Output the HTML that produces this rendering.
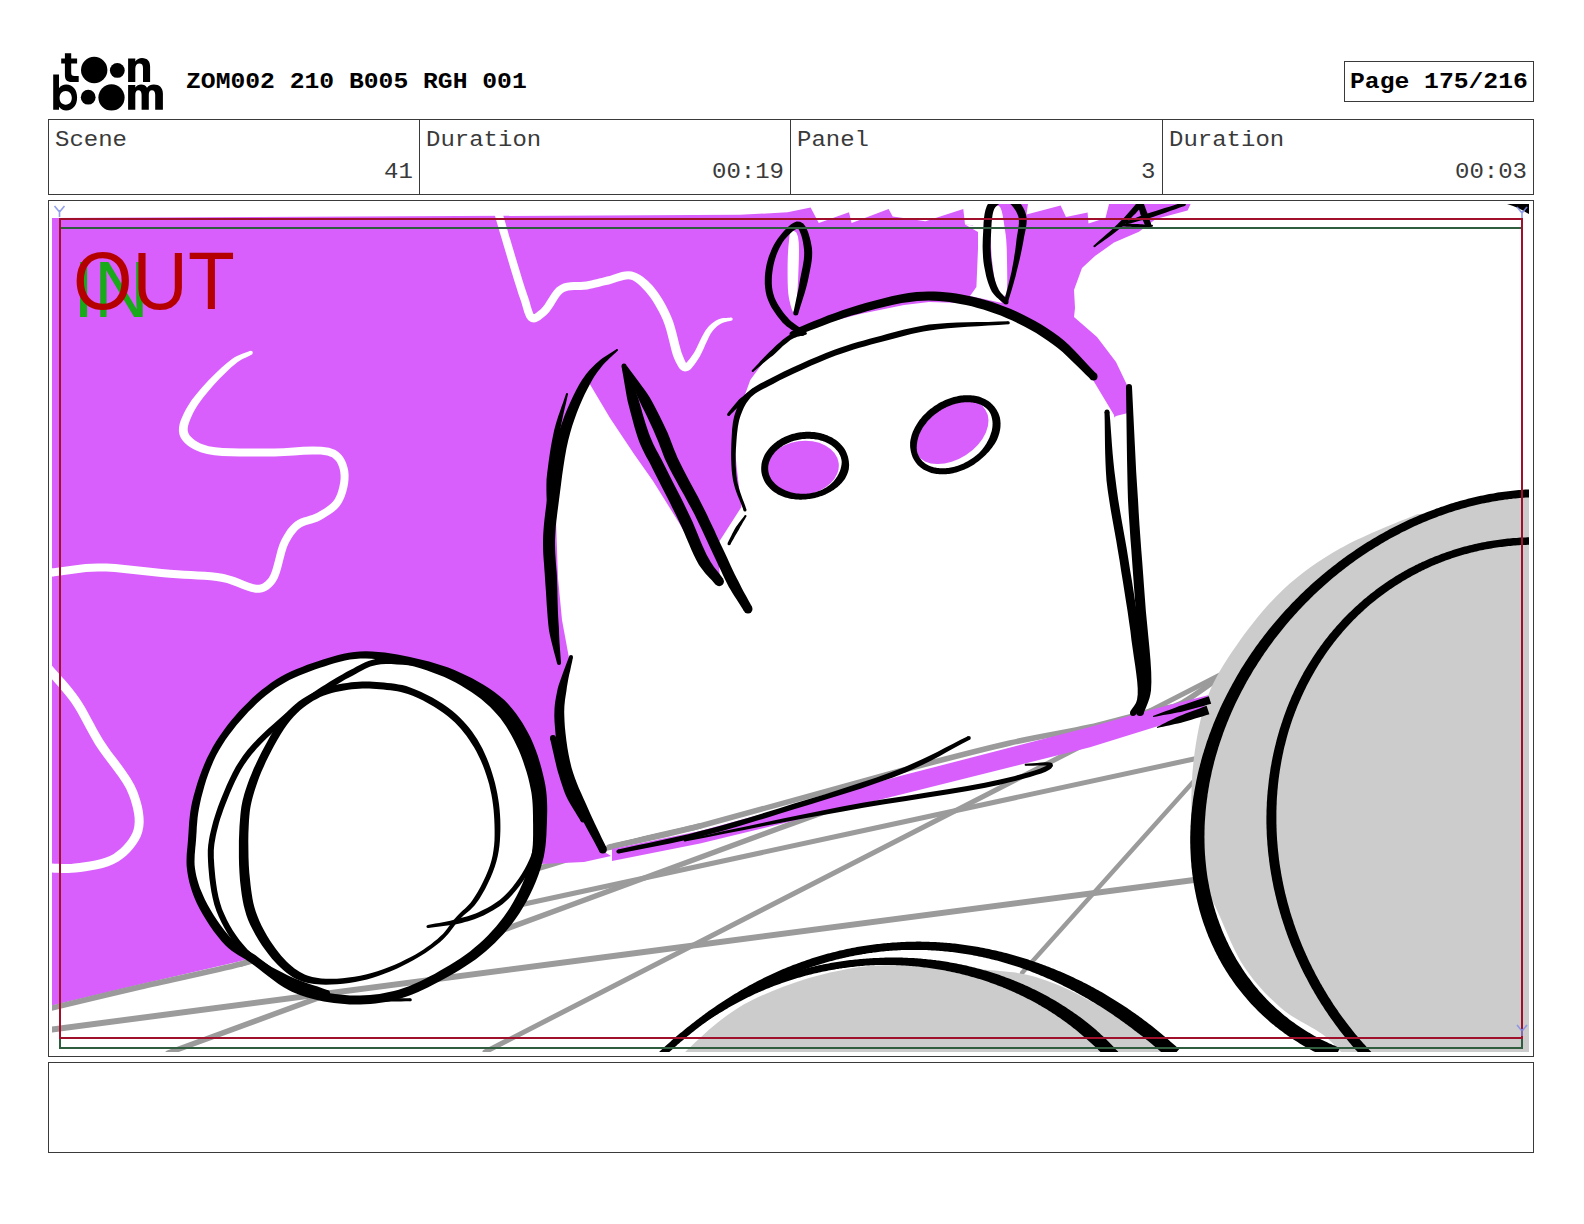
<!DOCTYPE html>
<html><head><meta charset="utf-8">
<style>
html,body{margin:0;padding:0;background:#fff;}
body{width:1584px;height:1224px;position:relative;overflow:hidden;font-family:"Liberation Mono",monospace;}
.abs{position:absolute;}
.box{position:absolute;border:1px solid #3a3a3a;box-sizing:border-box;}
.vline{position:absolute;width:1px;background:#3a3a3a;}
.t{position:absolute;white-space:pre;color:#000;line-height:1;}
.r{font-size:24px;color:#3a3a3a;transform:scaleY(0.93);transform-origin:0 0.766em;}
.b{font-size:24.7px;font-weight:bold;transform:scaleY(0.9);transform-origin:0 0.766em;}
</style></head>
<body>
<svg class="abs" style="left:0;top:0" width="200" height="120" viewBox="0 0 200 120">
<path d="M64.9,53.2H71.2V58.5H77.1V63.5H71.2V72.5C71.2,75.3 72,76 74.5,76H78.7V82.1H72C66.5,82.1 64.9,79.5 64.9,75V63.5H61.2V58.5H64.9Z"/>
<circle cx="94.2" cy="70" r="13.2"/>
<circle cx="117.3" cy="70.4" r="7.4"/>
<path d="M128.1,81.9V58.6H135.3V61.5C136.8,59.2 139.2,58 142,58C147.5,58 150.1,61.5 150.1,66.5V81.9H143V68C143,65 141.8,63.6 139.4,63.6C136.9,63.6 135.3,65.5 135.3,68.6V81.9Z"/>
<path fill-rule="evenodd" d="M53.2,74.4H59V88.2C60.5,85.8 63.2,84.5 66.2,84.5C73,84.5 77.1,90 77.1,97.5C77.1,105 73,110.4 66.2,110.4C63.2,110.4 60.6,109.2 59,106.8V109.7H53.2ZM65.7,90.9C61.8,90.9 59.6,93.9 59.6,97.8C59.6,101.7 61.8,104.7 65.7,104.7C69.6,104.7 71.8,101.7 71.8,97.8C71.8,93.9 69.6,90.9 65.7,90.9Z"/>
<circle cx="88.2" cy="97.2" r="7.4"/>
<circle cx="111.5" cy="97.4" r="13.1"/>
<path d="M128.1,109.7V85H135.3V87.6C136.6,85.6 138.6,84.5 141.2,84.5C143.8,84.5 145.8,85.6 147,87.8C148.6,85.6 151,84.5 153.8,84.5C159.4,84.5 162.9,87.8 162.9,93.5V109.7H155.2V95C155.2,91.8 154.2,90.2 151.9,90.2C149.7,90.2 148.8,91.8 148.8,95V109.7H141.6V95C141.6,91.8 140.6,90.2 138.4,90.2C136.2,90.2 135.3,91.8 135.3,95V109.7Z"/>
</svg>
<div class="t b" style="left:186px;top:69px;">ZOM002 210 B005 RGH 001</div>
<div class="box" style="left:1344px;top:61px;width:190px;height:41px;"></div>
<div class="t b" style="left:1350px;top:69px;">Page 175/216</div>
<div class="box" style="left:48px;top:119px;width:1486px;height:76px;"></div>
<div class="vline" style="left:419px;top:119px;height:76px;"></div>
<div class="vline" style="left:790px;top:119px;height:76px;"></div>
<div class="vline" style="left:1162px;top:119px;height:76px;"></div>
<div class="t r" style="left:55px;top:128px;">Scene</div>
<div class="t r" style="left:426px;top:128px;">Duration</div>
<div class="t r" style="left:797px;top:128px;">Panel</div>
<div class="t r" style="left:1169px;top:128px;">Duration</div>
<div class="t r" style="left:384px;top:160px;">41</div>
<div class="t r" style="left:712px;top:160px;">00:19</div>
<div class="t r" style="left:1141px;top:160px;">3</div>
<div class="t r" style="left:1455px;top:160px;">00:03</div>
<div class="box" style="left:48px;top:200px;width:1486px;height:857px;"></div>
<div class="box" style="left:48px;top:1062px;width:1486px;height:91px;"></div>
<svg class="abs" style="left:0;top:0" width="1584" height="1224" viewBox="0 0 1584 1224">
<defs><clipPath id="cp"><rect x="52" y="204" width="1477" height="848"/></clipPath></defs>
<g clip-path="url(#cp)">
<rect x="52" y="204" width="1477" height="848" fill="#fff"/>
<path d="M241,964C290.8,948 477.2,887.8 540,868C602.8,848.2 591.3,852 618,845C644.7,838 686.3,829.2 700,826" fill="none" stroke="#9b9b9b" stroke-width="5.5" stroke-linecap="round" stroke-linejoin="round"/>
<path d="M52,218 740,214.8 787.6,212.3 810.6,207.4 818.8,223 849,212.3 851.6,223 888.6,209 892.7,216.4 925.5,221.3 963.3,209 965,224.6 975.7,225.5 989.5,204 1028,204 1026.5,214.4 1060.6,205.4 1066,217 1087.6,212.6 1088.5,223.4 1105.5,218 1109,204 1190.6,204 1187.6,210.6 1155.8,218.9 1139,231.8 1114,242.4 1095,256 1082,268 1074,290 1075,308 1074,317 1097,337 1116,362 1127,385 1128,413 1116,416 1100,430 1100,690 850,770 620,830 598,848 611,856 584,862 541,864 241,961 140,984.5 52,1005.5Z" fill="#d85ffc"/>
<path d="M965,224.6 973,225.4 988,204 995,204 990,240 988,270 994,292 1002,303 970,296 976.4,287 978,249 978,232Z" fill="#fff"/>
<path d="M588,381 610,418 634,454 653,481 679,522.7 699,558 720,581 718,543.6 741.4,507 737,470 734,440 738,414 750.3,380 768.6,355 787,337.8 814,326 860,314 904,305 929,302 961,303 990,310 1008,317 1040,334 1056,345 1093,380 1114,415 1120,460 1125,500 1133,600 1142,697 1150,703 1090,722 850,783 612,844 600,850 590,825 580,800 570,774 559,725 565,690 569,658 562,620 558,578 556,520 561,450 568,431 578,405Z" fill="#fff"/>
<ellipse cx="802" cy="468" rx="37" ry="27" fill="#d85ffc" transform="rotate(-8 802 468)"/>
<ellipse cx="951" cy="432" rx="41" ry="27.5" fill="#d85ffc" transform="rotate(-33 951 432)"/>
<path d="M841.6,460.9 841.7,461.7 841.7,462.5 841.6,463.4 841.6,464.2 841.4,465.1 841.3,465.9 841.1,466.8 840.9,467.6 840.7,468.4 840.5,469.2 840.2,470.1 839.9,470.9 839.6,471.8 839.2,472.6 838.8,473.5 838.4,474.3 837.9,475.1 837.5,476 837,476.8 836.4,477.6 835.8,478.5 835.2,479.3 834.6,480.1 833.9,480.9 833.2,481.7 832.4,482.5 831.6,483.2 830.8,484 829.9,484.7 829,485.4 828.1,486.1 827.2,486.8 826.2,487.4 825.1,488 824.1,488.6 823,489.2 821.9,489.7 820.8,490.2 819.7,490.7 818.6,491.1 817.4,491.5 816.2,491.9 815,492.2 813.8,492.5 812.6,492.8 811.3,493.1 810.1,493.3 808.9,493.5 807.6,493.6 806.4,493.7 805.1,493.8 803.9,493.8 802.6,493.8 801.4,493.8 800.1,493.7 798.9,493.6 797.7,493.5 796.5,493.4 795.3,493.2 794.1,493 792.9,492.7 791.8,492.5 790.6,492.2 789.5,491.8 788.4,491.5 787.3,491.1 786.3,490.7 785.2,490.3 784.2,489.8 783.2,489.3 782.3,488.8 781.3,488.3 780.5,487.8 779.6,487.2 778.7,486.7 777.9,486.1 777.1,485.4 776.3,484.8 775.6,484.2 774.9,483.5 774.2,482.8 773.6,482.1 773,481.4 772.4,480.7 771.9,479.9 771.3,479.2 770.9,478.4 770.5,477.6 770.1,476.9 769.7,476.1 769.4,475.3 769.1,474.5 768.9,473.6 768.7,472.8 768.5,472 768.4,471.1 768.3,470.3 768.2,469.5 768.2,468.6 768.2,467.8 768.2,466.9 768.3,466 768.4,465.2 768.6,464.3 768.8,463.5 769,462.6 769.3,461.7 769.6,460.9 770,460 770.3,459.2 770.8,458.3 771.2,457.5 771.7,456.7 772.2,455.8 772.8,455 773.4,454.2 774,453.4 774.7,452.6 775.4,451.8 776.1,451.1 776.9,450.4 777.7,449.6 778.5,448.9 779.4,448.2 780.3,447.5 781.2,446.9 782.2,446.2 783.1,445.6 784.1,445 785.1,444.5 786.2,443.9 787.2,443.4 788.3,442.9 789.4,442.4 790.6,442 791.7,441.6 792.8,441.2 794,440.8 795.2,440.5 796.4,440.2 797.6,439.9 798.8,439.7 800,439.4 801.2,439.3 802.5,439.1 803.7,439 804.9,438.9 806.2,438.8 807.4,438.8 808.6,438.8 809.9,438.8 811.1,438.9 812.3,438.9 813.5,439.1 814.7,439.2 815.8,439.4 817,439.6 818.2,439.8 819.3,440.1 820.4,440.4 821.5,440.7 822.6,441.1 823.7,441.4 824.7,441.8 825.7,442.3 826.7,442.7 827.7,443.2 828.7,443.7 829.5,444.2 830.4,444.8 831.3,445.3 832.1,445.9 832.9,446.6 833.7,447.2 834.4,447.8 835.1,448.5 835.8,449.2 836.4,449.9 837,450.6 837.6,451.3 838.1,452.1 838.7,452.8 839.1,453.6 839.5,454.4 839.9,455.1 840.3,455.9 840.6,456.7 840.9,457.5 841.1,458.4 841.3,459.2 841.5,460Z M848.4,458.7 848.1,457.6 847.9,456.5 847.5,455.4 847.1,454.3 846.7,453.2 846.3,452.2 845.7,451.1 845.2,450.1 844.6,449.1 843.9,448.1 843.2,447.1 842.5,446.2 841.7,445.3 840.9,444.4 840.1,443.5 839.2,442.7 838.2,441.8 837.3,441.1 836.3,440.3 835.2,439.6 834.2,438.9 833.1,438.2 832.1,437.6 830.9,437 829.7,436.4 828.5,435.9 827.3,435.3 826.1,434.9 824.8,434.4 823.6,434 822.3,433.7 821,433.3 819.7,433 818.3,432.7 817,432.5 815.6,432.3 814.2,432.1 812.9,432 811.5,431.9 810.1,431.8 808.7,431.8 807.3,431.8 805.9,431.8 804.5,431.9 803.1,432 801.7,432.2 800.3,432.3 798.9,432.5 797.5,432.8 796.1,433.1 794.7,433.4 793.4,433.7 792,434.1 790.7,434.5 789.4,435 788.1,435.5 786.8,436 785.5,436.5 784.3,437.1 783,437.7 781.8,438.3 780.6,439 779.4,439.7 778.3,440.4 777.2,441.1 776.2,441.9 775.1,442.7 774.1,443.5 773.1,444.4 772.1,445.3 771.2,446.2 770.3,447.1 769.5,448 768.6,448.9 767.9,449.9 767.1,450.9 766.4,451.9 765.7,453 765.1,454.1 764.5,455.1 764,456.2 763.5,457.3 763.1,458.4 762.7,459.5 762.3,460.6 762,461.8 761.7,462.9 761.5,464.1 761.4,465.2 761.3,466.4 761.2,467.5 761.2,468.7 761.2,469.8 761.3,471 761.4,472.1 761.6,473.3 761.9,474.4 762.1,475.5 762.5,476.6 762.9,477.7 763.3,478.8 763.7,479.8 764.3,480.9 764.8,481.9 765.4,482.9 766.1,483.9 766.8,484.9 767.5,485.8 768.3,486.7 769.1,487.6 769.9,488.5 770.8,489.3 771.8,490.2 772.7,490.9 773.7,491.7 774.8,492.4 775.8,493.1 776.9,493.8 777.9,494.4 779.1,495 780.3,495.5 781.5,496.1 782.7,496.5 784,497 785.2,497.4 786.5,497.8 787.7,498.1 789.1,498.4 790.4,498.7 791.7,498.9 793.1,499.1 794.5,499.3 795.8,499.5 797.2,499.6 798.5,499.6 799.9,499.7 801.3,499.7 802.7,499.6 804.1,499.6 805.5,499.4 806.9,499.3 808.3,499.1 809.6,498.9 811,498.7 812.4,498.5 813.7,498.2 815.1,497.9 816.4,497.5 817.8,497.2 819.1,496.8 820.4,496.3 821.7,495.9 823,495.4 824.2,494.9 825.5,494.4 826.7,493.8 827.9,493.2 829.1,492.6 830.3,491.9 831.4,491.2 832.6,490.6 833.7,489.9 834.7,489.1 835.8,488.3 836.9,487.5 837.9,486.7 838.8,485.8 839.8,485 840.6,484.1 841.5,483.2 842.3,482.2 843.1,481.3 843.9,480.3 844.7,479.2 845.3,478.2 845.9,477.1 846.4,476 846.9,474.9 847.4,473.8 847.8,472.7 848.2,471.5 848.5,470.3 848.8,469.2 848.9,468 849,466.8 849.1,465.7 849.1,464.5 849,463.3 848.9,462.2 848.8,461 848.6,459.9Z" fill="#000"/>
<path d="M989.8,412.4 990.2,413.2 990.6,414 990.9,414.8 991.2,415.7 991.5,416.5 991.7,417.4 991.9,418.3 992.1,419.1 992.2,420 992.4,420.9 992.5,421.9 992.5,422.8 992.6,423.8 992.5,424.8 992.5,425.8 992.4,426.8 992.3,427.8 992.1,428.8 991.9,429.9 991.7,430.9 991.4,432 991,433.1 990.7,434.1 990.3,435.2 989.9,436.3 989.5,437.4 989,438.5 988.5,439.6 987.9,440.7 987.3,441.8 986.7,442.9 986.1,444 985.4,445.1 984.6,446.2 983.9,447.3 983.1,448.3 982.2,449.4 981.3,450.4 980.4,451.4 979.5,452.4 978.5,453.4 977.5,454.3 976.4,455.2 975.3,456.1 974.2,456.9 973.1,457.7 972,458.6 970.8,459.3 969.6,460.1 968.4,460.8 967.2,461.5 966,462.1 964.7,462.8 963.5,463.4 962.2,464 960.9,464.5 959.7,465 958.4,465.4 957.1,465.9 955.8,466.3 954.5,466.7 953.2,467 952,467.3 950.7,467.5 949.4,467.8 948.2,467.9 946.9,468.1 945.7,468.2 944.4,468.3 943.2,468.3 942,468.3 940.8,468.3 939.6,468.2 938.5,468.1 937.3,468 936.2,467.8 935.1,467.6 934,467.4 933,467.1 932,466.8 931,466.5 930,466.1 929.1,465.7 928.2,465.2 927.3,464.8 926.4,464.3 925.6,463.8 924.8,463.2 924.1,462.6 923.4,462 922.7,461.4 922.1,460.7 921.4,460 920.8,459.3 920.3,458.6 919.8,457.9 919.3,457.1 918.9,456.3 918.5,455.5 918.1,454.6 917.7,453.8 917.4,452.9 917.2,452 917,451.1 916.8,450.1 916.8,449.2 916.7,448.2 916.7,447.2 916.8,446.2 916.8,445.2 916.9,444.2 917.1,443.2 917.2,442.1 917.4,441.1 917.6,440 917.9,438.9 918.2,437.8 918.5,436.8 918.9,435.7 919.2,434.6 919.7,433.5 920.2,432.4 920.7,431.4 921.3,430.3 921.9,429.2 922.5,428.1 923.2,427 923.9,426 924.7,424.9 925.5,423.9 926.3,422.9 927.1,421.8 928,420.8 928.9,419.8 929.9,418.9 930.8,417.9 931.8,417 932.8,416.1 933.9,415.2 935,414.3 936.1,413.5 937.2,412.7 938.3,411.9 939.5,411.1 940.6,410.4 941.8,409.6 943,409 944.3,408.3 945.5,407.7 946.7,407.1 948,406.5 949.3,406 950.5,405.5 951.8,405 953,404.6 954.3,404.2 955.6,403.8 956.9,403.5 958.1,403.2 959.4,402.9 960.7,402.7 961.9,402.5 963.1,402.4 964.4,402.3 965.6,402.2 966.8,402.2 968,402.2 969.2,402.2 970.3,402.3 971.5,402.4 972.6,402.5 973.7,402.7 974.8,402.9 975.8,403.1 976.9,403.4 977.9,403.7 978.8,404 979.8,404.4 980.7,404.8 981.6,405.2 982.5,405.7 983.3,406.1 984.1,406.7 984.9,407.2 985.6,407.7 986.3,408.3 986.9,409 987.6,409.6 988.2,410.3 988.8,411 989.3,411.7Z M995,407.6 994.3,406.6 993.5,405.7 992.7,404.8 991.8,403.9 990.9,403.1 990,402.3 989,401.6 988,400.8 986.9,400.2 985.8,399.5 984.7,398.9 983.6,398.4 982.4,397.9 981.3,397.4 980.1,397 978.8,396.6 977.5,396.3 976.2,396 974.9,395.8 973.5,395.6 972.2,395.4 970.9,395.3 969.5,395.2 968.1,395.2 966.7,395.2 965.3,395.2 963.8,395.3 962.4,395.4 961,395.6 959.5,395.8 958.1,396.1 956.7,396.4 955.2,396.7 953.8,397.1 952.3,397.5 950.9,397.9 949.4,398.4 948,398.9 946.6,399.5 945.2,400.1 943.8,400.7 942.4,401.4 941,402.1 939.6,402.8 938.3,403.6 937,404.4 935.7,405.2 934.4,406.1 933.1,407 931.9,407.9 930.6,408.8 929.4,409.8 928.2,410.8 927.1,411.8 926,412.9 924.9,414 923.8,415 922.8,416.1 921.8,417.3 920.9,418.4 919.9,419.6 919,420.8 918.2,422 917.4,423.2 916.6,424.4 915.9,425.7 915.1,426.9 914.5,428.2 913.9,429.5 913.3,430.8 912.7,432.1 912.3,433.3 911.8,434.6 911.4,435.9 911.1,437.2 910.8,438.5 910.5,439.8 910.3,441.1 910.1,442.4 910.1,443.7 910.1,445 910.1,446.2 910.2,447.5 910.4,448.7 910.6,450 910.8,451.2 911.1,452.4 911.4,453.5 911.7,454.7 912.1,455.8 912.5,456.9 913,458 913.5,459.1 914.1,460.1 914.7,461.1 915.4,462.1 916.1,463.1 916.9,464 917.7,464.9 918.5,465.7 919.4,466.5 920.3,467.3 921.3,468 922.3,468.7 923.3,469.4 924.4,470 925.5,470.6 926.6,471.1 927.8,471.6 928.9,472.1 930.1,472.5 931.3,472.9 932.6,473.2 933.9,473.5 935.2,473.7 936.5,473.9 937.9,474.1 939.2,474.2 940.5,474.3 941.9,474.3 943.3,474.3 944.7,474.3 946.1,474.2 947.6,474.1 949,473.9 950.4,473.7 951.8,473.4 953.2,473.2 954.7,472.8 956.1,472.4 957.6,472 959,471.6 960.4,471.1 961.8,470.6 963.2,470 964.6,469.5 966,468.8 967.4,468.2 968.8,467.5 970.1,466.7 971.5,466 972.8,465.2 974.1,464.4 975.3,463.5 976.6,462.6 977.8,461.7 979.1,460.8 980.3,459.8 981.4,458.8 982.6,457.8 983.7,456.7 984.8,455.7 985.9,454.7 986.9,453.6 988,452.6 989,451.4 990,450.3 990.9,449.1 991.8,448 992.7,446.8 993.5,445.6 994.3,444.4 995.1,443.2 995.8,442 996.5,440.7 997.1,439.4 997.7,438.1 998.2,436.8 998.6,435.6 999,434.3 999.4,432.9 999.7,431.6 1000,430.3 1000.2,428.9 1000.4,427.6 1000.5,426.3 1000.5,425.1 1000.6,423.8 1000.5,422.5 1000.4,421.2 1000.3,419.9 1000.1,418.7 999.9,417.4 999.5,416.2 999.1,415.1 998.7,413.9 998.2,412.8 997.6,411.7 997,410.6 996.4,409.6 995.7,408.6Z" fill="#000"/>
<path d="M48,1009C63.3,1005.3 107.8,994.5 140,987C172.2,979.5 214.3,970.8 241,964C267.7,957.2 290.2,949 300,946" fill="none" stroke="#9b9b9b" stroke-width="5.5" stroke-linecap="round" stroke-linejoin="round"/>
<path d="M610,847C611.3,846.7 603,848.5 618,845C633,841.5 653,838.3 700,826C747,813.7 848.3,784.8 900,771C951.7,757.2 978.3,750.3 1010,743C1041.7,735.7 1065.8,732.5 1090,727C1114.2,721.5 1140,713.8 1155,710C1170,706.2 1169.2,709.5 1180,704C1190.8,698.5 1213.3,681.5 1220,677" fill="none" stroke="#9b9b9b" stroke-width="5.5" stroke-linecap="round" stroke-linejoin="round"/>
<path d="M168,1053C222.5,1033 393,970.5 495,933C597,895.5 720.8,849.7 780,828C839.2,806.3 838.3,807.2 850,803" fill="none" stroke="#9b9b9b" stroke-width="5.5" stroke-linecap="round" stroke-linejoin="round"/>
<path d="M485,1052C607.5,989.2 1097.5,737.8 1220,675" fill="none" stroke="#9b9b9b" stroke-width="5" stroke-linecap="round" stroke-linejoin="round"/>
<path d="M515,906C628.2,881.5 1080.8,783.5 1194,759" fill="none" stroke="#9b9b9b" stroke-width="5" stroke-linecap="round" stroke-linejoin="round"/>
<path d="M1194,781C1165.3,813 1050.7,941 1022,973" fill="none" stroke="#9b9b9b" stroke-width="4.5" stroke-linecap="round" stroke-linejoin="round"/>
<path d="M612,849 700,831 900,776 1090,727 1150,710 1211,694.5 1208,713.2 1158.4,726 1090,747.3 900,794.7 700,843.6 612,861Z" fill="#d85ffc"/>
<path d="M192,840 192.4,834.1 192.8,828.1 193.2,822 193.8,815.8 194.7,809.5 196,803 197.9,795.1 200.2,786.8 202.9,778.4 205.9,770 209.3,761.8 213,754 217,746.7 221.5,739.6 226.2,732.7 231.3,726.1 236.6,719.7 242,713.5 247.5,707.7 253.2,702.1 259.1,696.7 265.3,691.6 271.5,686.8 278,682.5 284.5,678.7 291.2,675.3 298,672.2 305,669.4 312,666.9 319,664.5 325.7,662.3 332.4,660.2 339.2,658.4 346,656.8 352.9,655.7 360,655 367.9,654.9 376,655.4 384.3,656.3 392.6,657.6 400.8,659.2 409,661 417.3,663 425.7,665.3 434,667.9 442.2,670.8 450.3,674 458,677.6 465.4,681.4 472.7,685.6 479.9,690.1 486.7,694.9 493.1,700 499,705.4 504,710.7 508.5,716.4 512.7,722.3 516.5,728.4 520.1,734.8 523.4,741.3 526.6,748.5 529.6,756.2 532.2,764 534.5,771.9 536.5,779.7 538,787 538.9,792.7 539.5,798.2 539.9,803.6 540,808.9 540.1,814.3 540,820 539.9,826.6 539.8,833.3 539.5,840.1 539,847 538,854 536.5,861 534.1,869.1 531.2,877.5 527.7,886 523.8,894.3 519.5,902.4 515,910 510.4,916.9 505.3,923.6 500,930 494.4,936.1 488.5,941.9 482.5,947.5 476.2,952.7 469.6,957.7 462.8,962.4 455.8,966.8 448.7,971 441.7,975 434.9,978.7 428,982.4 421,985.8 414.1,988.9 407,991.7 400,994 393.4,995.8 386.7,997.2 380.1,998.3 373.4,999.2 366.7,999.7 360,1000 353.3,1000 346.4,999.7 339.6,999.1 332.8,998.3 326.3,997.2 320,996 314.8,994.8 309.9,993.5 305,992.1 300.3,990.4 295.5,988.4 290.6,986 284.3,982.3 277.8,977.9 271.2,973 264.8,967.9 258.5,963.1 252.7,958.8 248.4,956 244.3,953.5 240.4,951.2 236.6,948.7 232.8,945.9 229,942.5 223.9,937 218.8,930.5 213.7,923.4 208.9,916 204.6,908.7 201,901.7 198.5,896.2 196.3,890.7 194.5,885.2 193,879.8 191.9,874.4 191,869 190.6,864.1 190.5,859.4 190.7,854.6 191.1,849.9 191.6,845Z" fill="#fff"/>
<path d="M52,1029.5C242.3,1004.6 1003.7,904.9 1194,880" fill="none" stroke="#9b9b9b" stroke-width="6" stroke-linecap="round" stroke-linejoin="round"/>
<path d="M1529,492C1512.8,495.3 1451.6,507.7 1431.6,512C1411.5,516.3 1424,511.6 1408.7,517.7C1393.4,523.8 1361,536.6 1340,548.6C1319,560.6 1300.2,573.8 1283,589.8C1265.8,605.8 1249.6,626.8 1237,644.7C1224.4,662.6 1214.6,678.1 1207.4,697.3C1200.2,716.5 1196.4,738.5 1193.7,760C1191,781.5 1191.2,806.5 1191.4,826C1191.7,845.5 1191.6,864 1195.2,876.7C1198.8,889.4 1205,887.3 1213,902C1221,916.7 1231.7,947.3 1243,965C1254.3,982.7 1267.8,996.5 1281,1008C1294.2,1019.5 1311.8,1026.5 1322,1034C1332.2,1041.5 1338.7,1049.8 1342,1053L1529,1053Z" fill="#cccccc"/>
<path d="M684,1053C689.7,1047.9 706.6,1031.1 718,1022.3C729.4,1013.5 738.1,1007.1 752.3,1000C766.5,992.9 786.4,985.1 803.4,979.7C820.4,974.3 840.3,970.1 854.5,967.7C868.7,965.3 877.7,965.5 888.6,965.2C899.5,964.9 908.1,965.5 920,966C931.9,966.5 946.7,967.2 960,968C973.3,968.8 988.7,969.8 1000,971C1011.3,972.2 1017.2,972.2 1028,975C1038.8,977.8 1051.3,981.8 1065,988C1078.7,994.2 1096.3,1004.3 1110,1012C1123.7,1019.7 1136.7,1027.2 1147,1034C1157.3,1040.8 1167.8,1049.8 1172,1053Z" fill="#cccccc"/>
<path d="M250,351 247.8,351.8 245.8,352.6 243.7,353.3 241.6,354 239.4,354.9 237,355.9 234.6,357.2 232,358.9 226.9,362.9 221.1,368 214.9,373.9 208.6,380.3 202.4,387 196.7,393.7 191.7,400.1 187.9,405.9 185.8,409.5 184,413.1 182.3,416.7 180.8,420.2 179.7,423.8 179,427.5 178.9,431.2 179.5,434.8 180.9,437.9 182.8,440.7 185.1,443.2 187.7,445.4 190.6,447.4 193.7,449.2 197,450.7 200.6,452.2 207,454.1 214.3,455.3 222.4,456 230.9,456.3 239.7,456.4 248.5,456.4 257.2,456.4 265.5,456.6 274.5,456.6 284.2,456.1 294,455.5 303.7,454.8 312.7,454.5 320.7,454.6 327.3,455.5 332,457.3 333.5,458.4 335.1,459.9 336.5,461.6 337.6,463.5 338.5,465.5 339.3,467.7 339.9,470 340.3,472.3 340.6,475.3 340.6,478.7 340.2,482.3 339.5,486.1 338.5,489.9 337.4,493.4 336,496.7 334.5,499.4 333,501.4 331.3,503.3 329.3,505.1 327,506.8 324.6,508.4 322,509.9 319.4,511.4 316.9,512.9 314.6,514 312.1,515 309.5,515.8 306.6,516.7 303.7,517.6 300.8,518.6 297.8,520 295.1,521.8 292.8,523.7 290.8,525.7 289,527.8 287.2,530.1 285.7,532.4 284.1,534.9 282.7,537.5 281.2,540.3 279.3,544.8 277.6,549.9 276.2,555.4 274.8,560.9 273.4,566.3 272,571.1 270.4,575 268.7,578 267.6,579.3 266.4,580.6 265.2,581.7 264.1,582.6 262.9,583.4 261.6,584 260.3,584.4 259,584.7 256.2,584.7 252.8,584.1 248.9,582.8 244.4,581.1 239.6,579.1 234.5,577.1 229.2,575.4 223.9,574.1 217.6,573.1 211.2,572.3 204.6,571.8 198,571.4 191.2,571.1 184.3,570.7 177.4,570.3 170.3,569.8 161.8,569 152.8,568 143.5,567 134.1,565.9 124.7,564.9 115.4,564.1 106.5,563.6 98,563.5 91.6,563.7 85.4,564.1 79.5,564.7 73.8,565.5 68.2,566.3 62.7,567.1 57.2,567.8 51.5,568.5 52.5,576.5 58.2,575.8 63.8,575 69.4,574.2 74.9,573.4 80.5,572.7 86.1,572.1 92,571.7 98,571.5 106.2,571.6 114.8,572.1 123.9,572.9 133.2,573.9 142.6,574.9 151.9,576 161,577 169.7,577.8 176.8,578.3 183.9,578.7 190.8,579 197.5,579.4 204.1,579.8 210.4,580.3 216.5,581 222.3,581.9 227,583.1 231.8,584.7 236.6,586.5 241.5,588.5 246.2,590.3 250.8,591.8 255.4,592.7 259.6,592.7 262.3,592.2 264.6,591.4 266.7,590.4 268.7,589.2 270.5,587.8 272.1,586.2 273.7,584.5 275.3,582.4 277.6,578.5 279.5,573.7 281.1,568.4 282.5,562.9 283.9,557.4 285.3,552.2 286.8,547.6 288.4,543.7 289.7,541.3 291,538.9 292.4,536.8 293.7,534.7 295.2,532.9 296.6,531.2 298.2,529.6 299.9,528.2 301.7,527 303.8,526 306.3,525.1 309,524.3 311.8,523.5 314.8,522.5 317.8,521.4 320.7,519.9 323.4,518.4 326.1,516.8 328.9,515.1 331.6,513.3 334.3,511.3 336.9,509 339.2,506.5 341.3,503.6 343.2,500.1 344.8,496.2 346.2,492.1 347.3,487.8 348.1,483.5 348.5,479.2 348.6,475.1 348.3,471.3 347.7,468.3 346.9,465.4 345.9,462.5 344.6,459.7 343,457 341,454.5 338.6,452.2 335.4,450.1 329.1,447.8 321.4,446.7 312.6,446.5 303.2,446.8 293.5,447.5 283.7,448.2 274.3,448.6 265.7,448.6 257.3,448.4 248.5,448.4 239.7,448.4 231.1,448.3 222.8,448 215.3,447.3 208.7,446.3 203.2,444.6 200.4,443.4 197.7,441.9 195.2,440.4 193,438.7 191.1,437.1 189.7,435.4 188.7,433.7 188.1,432.2 187.7,430.5 187.7,428.3 188.1,425.8 188.9,423 190,419.9 191.4,416.7 193,413.3 194.7,410.1 198.1,404.5 202.6,398.3 207.9,391.7 213.7,385.1 219.7,378.6 225.6,372.7 231,367.6 235.6,363.7 237.7,362.1 239.7,360.7 241.6,359.6 243.6,358.6 245.5,357.7 247.5,356.7 249.6,355.7 251.6,354.6Z" fill="#fff"/>
<circle cx="250.8" cy="352.8" r="2.00" fill="#fff"/>
<circle cx="52.0" cy="572.5" r="4.00" fill="#fff"/>
<path d="M494.2,213.1 495.4,217.3 496.6,221.4 497.8,225.5 499,229.7 500.2,233.8 501.5,238.1 502.8,242.5 504.2,247.2 506,253.3 508,260.1 510.1,267.1 512.3,274.3 514.5,281.4 516.6,288.1 518.6,294.4 520.5,299.8 521.5,302.8 522.4,306 523.3,309.1 524.2,312.2 525.3,315.1 526.5,317.7 528.3,320.2 531,321.9 533.9,322.4 536.3,321.9 538.3,321 540.2,319.9 541.9,318.6 543.6,317.3 545.1,315.9 546.8,314.5 549.2,311.9 551.5,308.7 553.7,305.4 555.8,301.9 557.8,298.7 559.9,295.8 562,293.6 564,292 566,291.2 568.4,290.6 571.2,290.2 574.1,290 577.3,290 580.6,289.9 584,289.8 587.3,289.4 590.2,288.8 593,288.2 595.7,287.6 598.4,286.9 601,286.3 603.6,285.6 606.2,285 609,284.4 612,283.6 615,282.6 618,281.6 620.9,280.7 623.6,279.9 626.1,279.4 628.3,279.2 630.2,279.4 632.1,280 634,281 635.9,282.2 637.8,283.7 639.8,285.4 641.8,287.4 643.7,289.5 645.6,291.6 648,294.4 650.4,297.4 652.6,300.8 654.9,304.4 657,308.2 659.1,312.1 661.1,316 662.9,319.9 664.6,324.4 666.2,329.4 667.6,334.8 669,340.2 670.3,345.6 671.6,350.7 673,355.4 674.5,359.3 675.4,361.2 676.3,362.9 677.1,364.6 678.1,366.3 679.1,367.9 680.5,369.4 682.3,370.7 684.9,371.5 687.6,371 689.7,369.9 691.3,368.4 692.7,366.8 694.1,365 695.4,363.2 696.6,361.4 697.9,359.6 699.8,356.5 701.7,352.8 703.5,348.9 705.3,344.8 707.1,340.9 708.8,337.2 710.5,334 712.2,331.5 713.2,330.2 714.3,329 715.3,327.9 716.3,326.9 717.4,326 718.5,325.2 719.6,324.4 720.8,323.8 721.9,323.2 723,322.7 724.3,322.3 725.6,321.9 727.1,321.6 728.5,321.2 730,320.9 731.5,320.5 730.9,317.5 729.5,317.7 728,317.8 726.5,317.9 725,317.9 723.4,318.1 721.9,318.3 720.2,318.7 718.6,319.2 717.1,320 715.6,320.8 714.2,321.7 712.8,322.7 711.5,323.8 710.1,325 708.8,326.3 707.4,327.9 705.3,330.8 703.3,334.3 701.3,338.1 699.4,342.1 697.5,346.1 695.7,349.8 693.9,353 692.1,355.6 690.9,357.2 689.6,358.9 688.3,360.5 687.1,361.9 686,362.9 685.2,363.5 685,363.6 685.5,363.5 686.3,363.6 686.3,363.6 686,363.1 685.5,362.1 684.9,360.8 684.2,359.2 683.5,357.5 682.9,355.9 681.5,352.5 680.3,348.3 679,343.4 677.7,338.1 676.3,332.5 674.8,326.9 673.1,321.5 671.1,316.5 669.2,312.2 667.1,308 664.9,303.8 662.6,299.8 660.2,295.9 657.7,292.2 655,288.7 652.4,285.6 650.1,283.3 647.9,281.1 645.5,279 643.1,277 640.5,275.2 637.8,273.7 634.9,272.4 631.8,271.6 628.4,271.2 625,271.5 621.7,272.1 618.6,273 615.5,274 612.5,275 609.7,275.9 607,276.6 604.4,277.2 601.7,277.9 599.1,278.5 596.5,279.2 593.9,279.8 591.3,280.4 588.6,281 586.1,281.4 583.3,281.8 580.4,281.9 577.2,282 573.8,282.1 570.4,282.2 566.9,282.7 563.4,283.6 560,285.2 556.6,287.6 553.7,290.8 551.2,294.2 549,297.7 546.9,301.1 544.9,304.2 543,306.8 541.2,308.7 539.9,309.9 538.4,311.1 537,312.3 535.7,313.2 534.6,313.9 533.8,314.3 533.5,314.4 534,314.5 534,314.5 533.4,313.7 532.7,312 531.9,309.7 531,306.9 530.1,303.8 529.2,300.5 528.1,297.2 526.2,291.8 524.2,285.7 522.1,279 520,272 517.8,264.8 515.7,257.8 513.7,251.1 511.8,244.8 510.5,240.3 509.1,235.9 507.9,231.6 506.7,227.4 505.5,223.3 504.3,219.2 503.1,215.1 501.8,210.9Z" fill="#fff"/>
<circle cx="498.0" cy="212.0" r="4.00" fill="#fff"/>
<circle cx="731.2" cy="319.0" r="1.50" fill="#fff"/>
<path d="M44.6,670.9 48,674.9 51.5,678.8 55,682.7 58.4,686.6 61.8,690.4 65.1,694.4 68.3,698.4 71.3,702.6 74.4,707.3 77.3,712.1 80.2,717.2 83,722.4 85.8,727.8 88.8,733.3 91.9,738.8 95.2,744.4 99.4,750.8 104.1,757.2 109,763.7 113.9,770.2 118.5,776.5 122.7,782.8 126.2,788.8 128.8,794.7 130.5,799.3 131.9,804 133.1,808.6 134,813.2 134.6,817.6 134.7,821.7 134.4,825.7 133.7,829.3 132.5,832.7 130.8,836.1 128.6,839.5 126.1,842.8 123.2,846 120.2,848.9 116.9,851.6 113.7,853.9 109.8,856 105.3,857.7 100.4,859.2 95.2,860.4 89.8,861.4 84.5,862.3 79.3,862.9 74.5,863.5 71.1,863.9 67.8,864 64.5,864 61.3,864 58.1,863.8 54.8,863.7 51.5,863.6 48.1,863.5 47.9,872.5 51.2,872.5 54.4,872.7 57.7,872.8 61,873 64.5,873 68,873 71.7,872.8 75.5,872.5 80.4,871.9 85.7,871.2 91.3,870.3 97,869.3 102.7,867.9 108.3,866.2 113.6,864.1 118.3,861.5 122.3,858.8 126.1,855.7 129.7,852.3 133,848.6 136,844.6 138.6,840.5 140.8,836.2 142.3,831.7 143.3,826.9 143.7,821.9 143.5,816.9 142.9,811.8 141.9,806.6 140.6,801.5 139,796.4 137.2,791.3 134.2,784.7 130.3,778 125.9,771.4 121.1,764.8 116.2,758.3 111.3,751.9 106.8,745.6 102.8,739.6 99.7,734.3 96.7,728.9 93.8,723.6 90.9,718.2 88.1,712.9 85.1,707.6 82,702.5 78.7,697.4 75.4,693 72.1,688.7 68.6,684.6 65.2,680.6 61.7,676.7 58.2,672.8 54.8,669 51.4,665.1Z" fill="#fff"/>
<circle cx="48.0" cy="668.0" r="4.50" fill="#fff"/>
<circle cx="48.0" cy="868.0" r="4.50" fill="#fff"/>
<path d="M1537.6,489 1535.6,489.1 1533.5,489.2 1531.4,489.3 1529.4,489.4 1527.3,489.5 1525.2,489.6 1523,489.7 1520.9,489.9 1518.8,490 1516.7,490.2 1514.6,490.4 1512.5,490.7 1510.3,490.9 1508.2,491.2 1506.1,491.4 1504,491.7 1501.9,492 1499.8,492.3 1497.6,492.6 1495.5,493 1493.4,493.4 1491.3,493.7 1489.1,494.1 1487,494.5 1484.9,494.9 1482.8,495.4 1480.7,495.8 1478.5,496.3 1476.4,496.8 1474.3,497.3 1472.2,497.8 1470.1,498.3 1467.9,498.8 1465.8,499.4 1463.7,499.9 1461.6,500.5 1459.5,501.1 1457.4,501.7 1455.3,502.3 1453.2,503 1451.1,503.6 1449,504.3 1446.9,505 1444.8,505.7 1442.7,506.4 1440.6,507.1 1438.5,507.9 1436.4,508.6 1434.3,509.4 1432.2,510.2 1430.1,510.9 1428,511.7 1426,512.6 1423.9,513.4 1421.8,514.2 1419.8,515.1 1417.7,516 1415.6,516.9 1413.6,517.8 1411.5,518.7 1409.5,519.6 1407.4,520.5 1405.4,521.5 1403.4,522.5 1401.3,523.4 1399.3,524.4 1397.3,525.4 1395.2,526.5 1393.2,527.5 1391.2,528.5 1389.2,529.6 1387.2,530.7 1385.2,531.8 1383.2,532.9 1381.2,534 1379.3,535.1 1377.3,536.2 1375.3,537.4 1373.4,538.5 1371.4,539.7 1369.5,540.9 1367.5,542.1 1365.6,543.3 1363.6,544.5 1361.7,545.8 1359.8,547 1357.9,548.3 1356,549.6 1354.1,550.9 1352.2,552.2 1350.3,553.5 1348.4,554.8 1346.6,556.1 1344.7,557.5 1342.8,558.8 1341,560.2 1339.1,561.6 1337.3,563 1335.5,564.4 1333.7,565.8 1331.8,567.2 1330,568.7 1328.2,570.1 1326.5,571.6 1324.7,573 1322.9,574.5 1321.1,576 1319.4,577.5 1317.6,579 1315.9,580.5 1314.1,582 1312.4,583.6 1310.7,585.1 1309,586.7 1307.3,588.2 1305.6,589.8 1303.9,591.4 1302.3,593 1300.6,594.6 1299,596.2 1297.3,597.9 1295.7,599.5 1294.1,601.2 1292.4,602.8 1290.8,604.5 1289.3,606.2 1287.7,607.9 1286.1,609.5 1284.5,611.3 1283,613 1281.4,614.7 1279.9,616.4 1278.4,618.2 1276.9,619.9 1275.4,621.7 1273.9,623.4 1272.4,625.2 1271,627 1269.5,628.8 1268.1,630.6 1266.6,632.4 1265.2,634.2 1263.8,636 1262.4,637.9 1261,639.7 1259.6,641.5 1258.3,643.4 1256.9,645.3 1255.6,647.1 1254.3,649 1252.9,650.9 1251.6,652.8 1250.3,654.7 1249.1,656.6 1247.8,658.5 1246.5,660.4 1245.3,662.3 1244.1,664.3 1242.8,666.2 1241.6,668.1 1240.4,670.1 1239.3,672 1238.1,674 1236.9,676 1235.8,677.9 1234.7,679.9 1233.6,681.9 1232.4,683.9 1231.4,685.9 1230.3,687.9 1229.2,689.9 1228.2,691.9 1227.1,693.9 1226.1,695.9 1225.1,697.9 1224.1,700 1223.1,702 1222.1,704 1221.2,706.1 1220.2,708.1 1219.3,710.2 1218.4,712.2 1217.5,714.3 1216.6,716.4 1215.7,718.4 1214.9,720.5 1214,722.6 1213.2,724.6 1212.4,726.7 1211.6,728.8 1210.8,730.9 1210,733 1209.2,735.1 1208.5,737.2 1207.8,739.2 1207,741.3 1206.3,743.5 1205.7,745.6 1205,747.7 1204.3,749.8 1203.7,751.9 1203,754 1202.4,756.1 1201.8,758.2 1201.2,760.3 1200.7,762.5 1200.1,764.6 1199.6,766.7 1199,768.8 1198.5,771 1198,773.1 1197.5,775.2 1197.1,777.3 1196.6,779.5 1196.2,781.6 1195.8,783.7 1195.4,785.8 1195,788 1194.6,790.1 1194.2,792.2 1193.9,794.4 1193.5,796.5 1193.2,798.6 1192.9,800.7 1192.6,802.9 1192.4,805 1192.1,807.1 1191.9,809.2 1191.7,811.4 1191.4,813.5 1191.2,815.6 1191.1,817.7 1190.9,819.9 1190.8,822 1190.7,824.1 1190.5,826.2 1190.5,828.3 1190.4,830.4 1190.3,832.5 1190.3,834.6 1190.2,836.7 1190.2,838.8 1190.2,840.9 1190.2,843 1190.3,845.1 1190.3,847.2 1190.4,849.3 1190.5,851.4 1190.6,853.5 1190.7,855.5 1190.8,857.6 1190.9,859.7 1191.1,861.7 1191.3,863.8 1191.4,865.9 1191.6,867.9 1191.9,870 1192.1,872 1192.3,874.1 1192.6,876.1 1192.9,878.1 1193.2,880.2 1193.5,882.2 1193.8,884.2 1194.2,886.2 1194.5,888.2 1194.9,890.2 1195.3,892.2 1195.7,894.2 1196.1,896.2 1196.5,898.2 1197,900.2 1197.4,902.1 1197.9,904.1 1198.4,906 1198.9,908 1199.4,909.9 1200,911.9 1200.5,913.8 1201.1,915.7 1201.7,917.7 1202.3,919.6 1202.9,921.5 1203.6,923.4 1204.2,925.2 1204.9,927.1 1205.6,929 1206.3,930.9 1207,932.7 1207.7,934.6 1208.4,936.4 1209.2,938.3 1210,940.1 1210.8,941.9 1211.6,943.7 1212.4,945.5 1213.2,947.3 1214.1,949.1 1214.9,950.9 1215.8,952.6 1216.7,954.4 1217.6,956.1 1218.5,957.9 1219.4,959.6 1220.4,961.3 1221.3,963 1222.3,964.7 1223.3,966.4 1224.3,968.1 1225.3,969.8 1226.4,971.5 1227.4,973.1 1228.5,974.7 1229.6,976.4 1230.7,978 1231.8,979.6 1232.9,981.2 1234,982.8 1235.2,984.4 1236.3,985.9 1237.5,987.5 1238.7,989 1239.9,990.6 1241.1,992.1 1242.3,993.6 1243.5,995.1 1244.8,996.6 1246.1,998.1 1247.3,999.5 1248.6,1001 1249.9,1002.4 1251.2,1003.9 1252.5,1005.3 1253.9,1006.7 1255.2,1008.1 1256.6,1009.5 1258,1010.9 1259.3,1012.2 1260.7,1013.6 1262.2,1014.9 1263.6,1016.2 1265,1017.5 1266.4,1018.8 1267.9,1020.1 1269.4,1021.4 1270.8,1022.7 1272.3,1023.9 1273.8,1025.1 1275.3,1026.4 1276.9,1027.6 1278.4,1028.8 1279.9,1030 1281.5,1031.1 1283.1,1032.3 1284.6,1033.4 1286.2,1034.6 1287.8,1035.7 1289.4,1036.8 1291,1037.9 1292.7,1039 1294.3,1040 1295.9,1041.1 1297.6,1042.1 1299.3,1043.2 1300.9,1044.2 1302.6,1045.2 1304.3,1046.2 1306,1047.2 1307.7,1048.1 1309.4,1049.1 1311.2,1050 1312.9,1050.9 1314.6,1051.8 1316.4,1052.7 1318.2,1053.6 1319.9,1054.5 1321.8,1055.3 1323.6,1056.2 1325.4,1057 1327.2,1057.7 1329,1058.5 1330.7,1059.3 1332.5,1060 1334.2,1060.8 1339.8,1047.9 1338,1047.2 1336.3,1046.4 1334.5,1045.6 1332.7,1044.9 1331,1044.1 1329.3,1043.4 1327.6,1042.6 1326,1041.8 1324.3,1041 1322.7,1040.2 1321,1039.4 1319.4,1038.5 1317.8,1037.7 1316.1,1036.8 1314.5,1035.9 1312.9,1035 1311.3,1034.1 1309.7,1033.1 1308.1,1032.2 1306.6,1031.2 1305,1030.3 1303.5,1029.3 1301.9,1028.3 1300.4,1027.3 1298.9,1026.3 1297.4,1025.2 1295.9,1024.2 1294.4,1023.1 1292.9,1022.1 1291.4,1021 1290,1019.9 1288.5,1018.8 1287.1,1017.6 1285.7,1016.5 1284.3,1015.4 1282.9,1014.2 1281.5,1013 1280.1,1011.8 1278.7,1010.6 1277.4,1009.4 1276,1008.2 1274.7,1007 1273.4,1005.7 1272,1004.5 1270.7,1003.2 1269.4,1002 1268.2,1000.7 1266.9,999.4 1265.6,998.1 1264.4,996.7 1263.2,995.4 1261.9,994.1 1260.7,992.7 1259.5,991.4 1258.3,990 1257.2,988.6 1256,987.2 1254.8,985.8 1253.7,984.4 1252.6,983 1251.5,981.5 1250.4,980.1 1249.3,978.6 1248.2,977.2 1247.1,975.7 1246.1,974.2 1245,972.7 1244,971.2 1243,969.7 1242,968.2 1241,966.6 1240,965.1 1239,963.6 1238.1,962 1237.1,960.4 1236.2,958.9 1235.3,957.3 1234.4,955.7 1233.5,954.1 1232.6,952.5 1231.7,950.8 1230.9,949.2 1230,947.6 1229.2,945.9 1228.4,944.3 1227.6,942.6 1226.8,940.9 1226,939.3 1225.3,937.6 1224.5,935.9 1223.8,934.2 1223,932.5 1222.3,930.8 1221.6,929 1221,927.3 1220.3,925.6 1219.6,923.8 1219,922 1218.4,920.3 1217.7,918.5 1217.1,916.7 1216.6,915 1216,913.2 1215.4,911.4 1214.9,909.6 1214.3,907.7 1213.8,905.9 1213.3,904.1 1212.8,902.3 1212.3,900.4 1211.8,898.6 1211.4,896.8 1210.9,894.9 1210.5,893 1210.1,891.2 1209.7,889.3 1209.3,887.4 1209,885.5 1208.6,883.6 1208.3,881.7 1207.9,879.8 1207.6,877.9 1207.3,876 1207,874.1 1206.8,872.2 1206.5,870.3 1206.3,868.3 1206.1,866.4 1205.9,864.4 1205.7,862.5 1205.5,860.5 1205.3,858.6 1205.2,856.6 1205,854.7 1204.9,852.7 1204.8,850.7 1204.7,848.8 1204.6,846.8 1204.6,844.8 1204.5,842.8 1204.5,840.8 1204.5,838.8 1204.4,836.8 1204.5,834.8 1204.5,832.8 1204.5,830.8 1204.6,828.8 1204.6,826.8 1204.7,824.8 1204.8,822.8 1204.9,820.8 1205.1,818.7 1205.2,816.7 1205.4,814.7 1205.5,812.7 1205.7,810.6 1205.9,808.6 1206.1,806.6 1206.3,804.5 1206.6,802.5 1206.8,800.5 1207.1,798.4 1207.4,796.4 1207.6,794.3 1208,792.3 1208.3,790.3 1208.6,788.2 1209,786.2 1209.3,784.1 1209.7,782.1 1210.1,780 1210.5,778 1211,775.9 1211.4,773.9 1211.8,771.8 1212.3,769.8 1212.8,767.8 1213.3,765.7 1213.8,763.7 1214.3,761.6 1214.9,759.6 1215.4,757.5 1216,755.5 1216.6,753.5 1217.2,751.4 1217.8,749.4 1218.4,747.3 1219.1,745.3 1219.7,743.3 1220.4,741.2 1221.1,739.2 1221.8,737.2 1222.5,735.2 1223.2,733.1 1224,731.1 1224.7,729.1 1225.5,727.1 1226.3,725.1 1227,723 1227.9,721 1228.7,719 1229.5,717 1230.4,715 1231.2,713 1232.1,711 1233,709.1 1233.9,707.1 1234.8,705.1 1235.7,703.1 1236.7,701.1 1237.6,699.2 1238.6,697.2 1239.6,695.2 1240.6,693.3 1241.6,691.3 1242.6,689.4 1243.7,687.4 1244.7,685.5 1245.8,683.5 1246.8,681.6 1247.9,679.7 1249,677.8 1250.1,675.9 1251.3,674 1252.4,672 1253.5,670.1 1254.7,668.3 1255.9,666.4 1257.1,664.5 1258.3,662.6 1259.5,660.7 1260.7,658.9 1261.9,657 1263.2,655.2 1264.4,653.3 1265.7,651.5 1267,649.7 1268.3,647.8 1269.6,646 1270.9,644.2 1272.2,642.4 1273.6,640.6 1274.9,638.8 1276.3,637 1277.7,635.3 1279.1,633.5 1280.5,631.7 1281.9,630 1283.3,628.2 1284.7,626.5 1286.1,624.8 1287.6,623.1 1289.1,621.3 1290.5,619.6 1292,617.9 1293.5,616.3 1295,614.6 1296.5,612.9 1298,611.3 1299.6,609.6 1301.1,608 1302.7,606.3 1304.2,604.7 1305.8,603.1 1307.4,601.5 1309,599.9 1310.6,598.3 1312.2,596.7 1313.8,595.1 1315.5,593.6 1317.1,592 1318.7,590.5 1320.4,589 1322.1,587.4 1323.7,585.9 1325.4,584.4 1327.1,582.9 1328.8,581.5 1330.5,580 1332.2,578.5 1334,577.1 1335.7,575.7 1337.5,574.2 1339.2,572.8 1341,571.4 1342.8,570 1344.5,568.7 1346.3,567.3 1348.1,565.9 1349.9,564.6 1351.7,563.3 1353.5,561.9 1355.4,560.6 1357.2,559.3 1359,558.1 1360.9,556.8 1362.7,555.5 1364.6,554.3 1366.5,553 1368.3,551.8 1370.2,550.6 1372.1,549.4 1374,548.2 1375.9,547 1377.8,545.9 1379.7,544.7 1381.6,543.6 1383.5,542.4 1385.4,541.3 1387.4,540.2 1389.3,539.1 1391.2,538 1393.2,537 1395.1,535.9 1397.1,534.9 1399.1,533.9 1401,532.8 1403,531.8 1405,530.9 1406.9,529.9 1408.9,528.9 1410.9,528 1412.9,527 1414.9,526.1 1416.9,525.2 1418.9,524.3 1420.9,523.4 1422.9,522.6 1424.9,521.7 1426.9,520.9 1429,520 1431,519.2 1433,518.4 1435.1,517.7 1437.1,516.9 1439.1,516.1 1441.2,515.4 1443.2,514.7 1445.2,514 1447.3,513.3 1449.3,512.6 1451.4,511.9 1453.5,511.3 1455.5,510.6 1457.6,510 1459.6,509.4 1461.7,508.8 1463.7,508.2 1465.8,507.7 1467.9,507.1 1469.9,506.6 1472,506 1474.1,505.5 1476.1,505 1478.2,504.6 1480.3,504.1 1482.3,503.6 1484.4,503.2 1486.5,502.8 1488.6,502.4 1490.6,502 1492.7,501.6 1494.7,501.2 1496.8,500.9 1498.9,500.6 1500.9,500.2 1503,499.9 1505.1,499.6 1507.1,499.4 1509.2,499.1 1511.3,498.9 1513.3,498.6 1515.4,498.4 1517.4,498.2 1519.5,498 1521.6,497.8 1523.6,497.7 1525.6,497.6 1527.7,497.5 1529.7,497.4 1531.8,497.3 1533.9,497.2 1535.9,497.1 1538,497Z" fill="#000"/>
<path d="M1538,537.2 1536.3,537.2 1534.5,537.2 1532.8,537.3 1531,537.3 1529.2,537.3 1527.4,537.3 1525.6,537.4 1523.8,537.4 1522.1,537.5 1520.3,537.6 1518.5,537.7 1516.7,537.9 1515,538 1513.2,538.1 1511.4,538.3 1509.6,538.4 1507.9,538.6 1506.1,538.8 1504.4,539 1502.6,539.2 1500.8,539.4 1499.1,539.7 1497.3,539.9 1495.6,540.2 1493.8,540.4 1492.1,540.7 1490.4,541 1488.6,541.3 1486.9,541.6 1485.2,541.9 1483.4,542.2 1481.7,542.6 1480,542.9 1478.3,543.3 1476.5,543.7 1474.8,544.1 1473.1,544.5 1471.4,544.9 1469.7,545.3 1468,545.7 1466.3,546.2 1464.6,546.6 1462.9,547.1 1461.2,547.6 1459.6,548.1 1457.9,548.6 1456.2,549.1 1454.5,549.6 1452.9,550.1 1451.2,550.7 1449.5,551.2 1447.9,551.8 1446.2,552.3 1444.6,552.9 1442.9,553.5 1441.3,554.1 1439.7,554.7 1438,555.4 1436.4,556 1434.8,556.6 1433.2,557.3 1431.6,557.9 1430,558.6 1428.4,559.3 1426.8,560 1425.2,560.7 1423.6,561.4 1422,562.1 1420.4,562.9 1418.8,563.6 1417.3,564.4 1415.7,565.1 1414.2,565.9 1412.6,566.7 1411.1,567.5 1409.5,568.3 1408,569.1 1406.5,570 1404.9,570.8 1403.4,571.7 1401.9,572.5 1400.4,573.4 1398.9,574.3 1397.4,575.2 1395.9,576.1 1394.5,577 1393,577.9 1391.5,578.9 1390.1,579.8 1388.6,580.8 1387.2,581.7 1385.7,582.7 1384.3,583.7 1382.9,584.7 1381.4,585.7 1380,586.7 1378.6,587.8 1377.2,588.8 1375.8,589.8 1374.5,590.9 1373.1,592 1371.7,593 1370.3,594.1 1369,595.2 1367.6,596.3 1366.3,597.4 1364.9,598.5 1363.6,599.6 1362.3,600.8 1361,601.9 1359.7,603.1 1358.4,604.2 1357.1,605.4 1355.8,606.6 1354.5,607.8 1353.2,609 1352,610.2 1350.7,611.4 1349.5,612.6 1348.2,613.8 1347,615.1 1345.8,616.3 1344.5,617.6 1343.3,618.8 1342.1,620.1 1340.9,621.4 1339.7,622.7 1338.6,624 1337.4,625.3 1336.2,626.6 1335.1,627.9 1333.9,629.2 1332.8,630.6 1331.7,631.9 1330.5,633.3 1329.4,634.6 1328.3,636 1327.2,637.4 1326.1,638.8 1325.1,640.1 1324,641.5 1322.9,642.9 1321.9,644.4 1320.8,645.8 1319.8,647.2 1318.8,648.7 1317.8,650.1 1316.8,651.6 1315.8,653 1314.8,654.5 1313.8,656 1312.8,657.4 1311.9,658.9 1310.9,660.4 1310,661.9 1309,663.4 1308.1,664.9 1307.2,666.5 1306.3,668 1305.4,669.5 1304.5,671.1 1303.6,672.6 1302.8,674.2 1301.9,675.7 1301.1,677.3 1300.2,678.9 1299.4,680.5 1298.6,682.1 1297.8,683.7 1297,685.3 1296.2,686.9 1295.4,688.5 1294.7,690.1 1293.9,691.7 1293.2,693.4 1292.4,695 1291.7,696.6 1291,698.3 1290.3,700 1289.6,701.6 1288.9,703.3 1288.2,704.9 1287.6,706.6 1286.9,708.3 1286.3,710 1285.6,711.7 1285,713.4 1284.4,715.1 1283.8,716.8 1283.2,718.5 1282.6,720.2 1282.1,721.9 1281.5,723.6 1280.9,725.4 1280.4,727.1 1279.8,728.8 1279.3,730.6 1278.8,732.3 1278.3,734.1 1277.8,735.8 1277.3,737.6 1276.8,739.3 1276.4,741.1 1275.9,742.9 1275.5,744.7 1275,746.4 1274.6,748.2 1274.2,750 1273.8,751.8 1273.4,753.6 1273,755.4 1272.6,757.2 1272.3,759 1271.9,760.8 1271.6,762.6 1271.3,764.4 1270.9,766.2 1270.6,768 1270.3,769.9 1270.1,771.7 1269.8,773.5 1269.5,775.3 1269.3,777.2 1269,779 1268.8,780.8 1268.6,782.7 1268.4,784.5 1268.2,786.4 1268,788.2 1267.8,790.1 1267.6,791.9 1267.5,793.8 1267.3,795.6 1267.2,797.5 1267.1,799.3 1266.9,801.2 1266.8,803.1 1266.8,804.9 1266.7,806.8 1266.6,808.7 1266.5,810.5 1266.5,812.4 1266.5,814.3 1266.4,816.2 1266.4,818 1266.4,819.9 1266.4,821.8 1266.4,823.7 1266.5,825.6 1266.5,827.4 1266.6,829.3 1266.7,831.2 1266.7,833.1 1266.8,835 1266.9,836.9 1267,838.7 1267.2,840.6 1267.3,842.5 1267.4,844.4 1267.6,846.3 1267.8,848.2 1267.9,850.1 1268.1,851.9 1268.3,853.8 1268.5,855.7 1268.8,857.6 1269,859.5 1269.2,861.4 1269.5,863.3 1269.7,865.1 1270,867 1270.3,868.9 1270.6,870.8 1270.9,872.7 1271.2,874.6 1271.6,876.4 1271.9,878.3 1272.2,880.2 1272.6,882.1 1273,883.9 1273.3,885.8 1273.7,887.7 1274.1,889.6 1274.6,891.4 1275,893.3 1275.4,895.2 1275.9,897 1276.3,898.9 1276.8,900.7 1277.2,902.6 1277.7,904.5 1278.2,906.3 1278.7,908.2 1279.3,910 1279.8,911.9 1280.3,913.7 1280.9,915.6 1281.4,917.4 1282,919.2 1282.6,921.1 1283.2,922.9 1283.8,924.7 1284.4,926.6 1285,928.4 1285.6,930.2 1286.3,932 1286.9,933.9 1287.6,935.7 1288.2,937.5 1288.9,939.3 1289.6,941.1 1290.3,942.9 1291,944.7 1291.7,946.5 1292.5,948.3 1293.2,950.1 1294,951.9 1294.7,953.6 1295.5,955.4 1296.3,957.2 1297.1,959 1297.9,960.7 1298.7,962.5 1299.5,964.2 1300.3,966 1301.1,967.7 1302,969.5 1302.8,971.2 1303.7,973 1304.6,974.7 1305.5,976.4 1306.4,978.1 1307.3,979.8 1308.2,981.6 1309.1,983.3 1310,985 1311,986.7 1311.9,988.4 1312.9,990 1313.9,991.7 1314.8,993.4 1315.8,995.1 1316.8,996.7 1317.8,998.4 1318.8,1000.1 1319.9,1001.7 1320.9,1003.4 1321.9,1005 1323,1006.6 1324,1008.3 1325.1,1009.9 1326.2,1011.5 1327.3,1013.1 1328.3,1014.7 1329.4,1016.3 1330.6,1017.9 1331.7,1019.5 1332.8,1021.1 1333.9,1022.6 1335.1,1024.2 1336.2,1025.8 1337.4,1027.3 1338.6,1028.9 1339.7,1030.4 1340.9,1032 1342.1,1033.5 1343.3,1035 1344.5,1036.5 1345.7,1038 1347,1039.5 1348.2,1041 1349.4,1042.5 1350.7,1044 1351.9,1045.5 1353.2,1047 1354.5,1048.4 1355.8,1049.9 1357.1,1051.3 1358.4,1052.8 1359.7,1054.2 1361,1055.6 1362.3,1057 1363.6,1058.4 1364.9,1059.8 1372.2,1053 1370.9,1051.6 1369.6,1050.2 1368.3,1048.8 1367,1047.4 1365.8,1046 1364.5,1044.6 1363.2,1043.2 1362,1041.8 1360.8,1040.4 1359.5,1039 1358.3,1037.5 1357.1,1036.1 1355.9,1034.7 1354.7,1033.2 1353.5,1031.7 1352.3,1030.3 1351.2,1028.8 1350,1027.3 1348.8,1025.8 1347.7,1024.3 1346.5,1022.8 1345.4,1021.3 1344.3,1019.8 1343.1,1018.3 1342,1016.8 1340.9,1015.3 1339.8,1013.7 1338.7,1012.2 1337.7,1010.6 1336.6,1009.1 1335.5,1007.5 1334.5,1005.9 1333.4,1004.4 1332.4,1002.8 1331.4,1001.2 1330.4,999.6 1329.3,998 1328.3,996.4 1327.3,994.8 1326.4,993.2 1325.4,991.6 1324.4,990 1323.5,988.3 1322.5,986.7 1321.6,985.1 1320.6,983.4 1319.7,981.8 1318.8,980.1 1317.9,978.5 1317,976.8 1316.1,975.2 1315.2,973.5 1314.4,971.8 1313.5,970.1 1312.6,968.5 1311.8,966.8 1311,965.1 1310.2,963.4 1309.3,961.7 1308.5,960 1307.7,958.3 1307,956.6 1306.2,954.9 1305.4,953.1 1304.7,951.4 1303.9,949.7 1303.2,948 1302.4,946.2 1301.7,944.5 1301,942.7 1300.3,941 1299.6,939.3 1298.9,937.5 1298.3,935.7 1297.6,934 1297,932.2 1296.3,930.5 1295.7,928.7 1295.1,926.9 1294.5,925.2 1293.8,923.4 1293.3,921.6 1292.7,919.8 1292.1,918.1 1291.5,916.3 1291,914.5 1290.4,912.7 1289.9,910.9 1289.4,909.1 1288.9,907.3 1288.4,905.5 1287.9,903.7 1287.4,901.9 1286.9,900.1 1286.5,898.3 1286,896.5 1285.6,894.7 1285.1,892.9 1284.7,891.1 1284.3,889.2 1283.9,887.4 1283.5,885.6 1283.1,883.8 1282.8,882 1282.4,880.2 1282.1,878.3 1281.7,876.5 1281.4,874.7 1281.1,872.9 1280.8,871 1280.5,869.2 1280.2,867.4 1279.9,865.6 1279.6,863.7 1279.4,861.9 1279.1,860.1 1278.9,858.2 1278.7,856.4 1278.5,854.6 1278.3,852.8 1278.1,850.9 1277.9,849.1 1277.7,847.3 1277.6,845.4 1277.4,843.6 1277.3,841.8 1277.1,840 1277,838.1 1276.9,836.3 1276.8,834.5 1276.7,832.6 1276.6,830.8 1276.6,829 1276.5,827.2 1276.5,825.3 1276.4,823.5 1276.4,821.7 1276.4,819.9 1276.4,818.1 1276.4,816.2 1276.4,814.4 1276.4,812.6 1276.4,810.8 1276.5,809 1276.5,807.2 1276.6,805.3 1276.7,803.5 1276.7,801.7 1276.8,799.9 1276.9,798.1 1277,796.3 1277.2,794.5 1277.3,792.7 1277.4,790.9 1277.6,789.1 1277.8,787.3 1277.9,785.5 1278.1,783.8 1278.3,782 1278.5,780.2 1278.7,778.4 1279,776.6 1279.2,774.8 1279.5,773.1 1279.7,771.3 1280,769.5 1280.3,767.8 1280.6,766 1280.9,764.2 1281.2,762.5 1281.5,760.7 1281.8,759 1282.2,757.2 1282.5,755.5 1282.9,753.8 1283.3,752 1283.6,750.3 1284,748.6 1284.4,746.8 1284.9,745.1 1285.3,743.4 1285.7,741.7 1286.2,740 1286.6,738.2 1287.1,736.5 1287.5,734.9 1288,733.2 1288.5,731.5 1289,729.8 1289.6,728.1 1290.1,726.4 1290.6,724.7 1291.2,723.1 1291.7,721.4 1292.3,719.8 1292.9,718.1 1293.5,716.5 1294.1,714.8 1294.7,713.2 1295.3,711.5 1296,709.9 1296.6,708.3 1297.2,706.7 1297.9,705.1 1298.6,703.4 1299.3,701.8 1300,700.2 1300.7,698.7 1301.4,697.1 1302.1,695.5 1302.8,693.9 1303.6,692.3 1304.3,690.8 1305.1,689.2 1305.8,687.7 1306.6,686.1 1307.4,684.6 1308.2,683.1 1309,681.5 1309.8,680 1310.6,678.5 1311.4,677 1312.3,675.5 1313.1,674 1314,672.5 1314.8,671 1315.7,669.5 1316.6,668 1317.5,666.5 1318.4,665.1 1319.3,663.6 1320.2,662.2 1321.1,660.7 1322,659.3 1323,657.9 1323.9,656.4 1324.9,655 1325.9,653.6 1326.8,652.2 1327.8,650.8 1328.8,649.4 1329.8,648.1 1330.8,646.7 1331.9,645.3 1332.9,644 1333.9,642.6 1335,641.3 1336,639.9 1337.1,638.6 1338.2,637.3 1339.2,636 1340.3,634.7 1341.4,633.4 1342.5,632.1 1343.6,630.8 1344.8,629.5 1345.9,628.2 1347,627 1348.2,625.7 1349.3,624.5 1350.5,623.3 1351.7,622 1352.8,620.8 1354,619.6 1355.2,618.4 1356.4,617.2 1357.6,616 1358.8,614.8 1360.1,613.7 1361.3,612.5 1362.5,611.4 1363.8,610.2 1365,609.1 1366.3,608 1367.6,606.8 1368.8,605.7 1370.1,604.6 1371.4,603.6 1372.7,602.5 1374,601.4 1375.3,600.4 1376.7,599.3 1378,598.3 1379.3,597.2 1380.7,596.2 1382,595.2 1383.4,594.2 1384.7,593.2 1386.1,592.2 1387.5,591.2 1388.9,590.3 1390.2,589.3 1391.6,588.4 1393,587.4 1394.4,586.5 1395.9,585.6 1397.3,584.7 1398.7,583.8 1400.1,582.9 1401.6,582 1403,581.1 1404.5,580.3 1405.9,579.4 1407.4,578.6 1408.8,577.7 1410.3,576.9 1411.8,576.1 1413.2,575.3 1414.7,574.5 1416.2,573.7 1417.7,572.9 1419.2,572.1 1420.7,571.4 1422.2,570.6 1423.8,569.9 1425.3,569.1 1426.8,568.4 1428.3,567.7 1429.9,567 1431.4,566.3 1433,565.6 1434.5,565 1436.1,564.3 1437.7,563.7 1439.2,563 1440.8,562.4 1442.4,561.8 1443.9,561.2 1445.5,560.6 1447.1,560 1448.7,559.4 1450.3,558.9 1451.9,558.3 1453.6,557.8 1455.2,557.3 1456.8,556.7 1458.4,556.2 1460,555.7 1461.7,555.3 1463.3,554.8 1464.9,554.3 1466.6,553.9 1468.2,553.4 1469.9,553 1471.5,552.6 1473.2,552.2 1474.8,551.8 1476.5,551.4 1478.2,551 1479.8,550.6 1481.5,550.3 1483.2,549.9 1484.9,549.6 1486.5,549.3 1488.2,549 1489.9,548.7 1491.6,548.4 1493.3,548.1 1495,547.8 1496.7,547.6 1498.4,547.3 1500.1,547.1 1501.8,546.9 1503.5,546.7 1505.2,546.4 1506.9,546.3 1508.6,546.1 1510.4,545.9 1512.1,545.7 1513.8,545.6 1515.5,545.5 1517.3,545.3 1519,545.2 1520.7,545.1 1522.4,545 1524.2,544.9 1525.9,544.9 1527.6,544.8 1529.3,544.8 1531.1,544.8 1532.8,544.8 1534.6,544.7 1536.4,544.7 1538.1,544.7Z" fill="#000"/>
<path d="M662,1058.8 663.4,1057.5 664.9,1056.2 666.3,1054.9 667.7,1053.5 669.1,1052.2 670.5,1050.9 671.9,1049.7 673.3,1048.4 674.8,1047.1 676.2,1045.9 677.6,1044.6 679,1043.4 680.5,1042.1 681.9,1040.9 683.4,1039.7 684.8,1038.5 686.3,1037.3 687.7,1036.1 689.2,1034.9 690.6,1033.7 692.1,1032.6 693.5,1031.4 695,1030.2 696.5,1029.1 698,1027.9 699.4,1026.8 700.9,1025.7 702.4,1024.6 703.9,1023.5 705.4,1022.4 706.9,1021.3 708.4,1020.2 709.9,1019.1 711.4,1018.1 712.9,1017 714.4,1016 715.9,1014.9 717.4,1013.9 718.9,1012.9 720.5,1011.9 722,1010.9 723.5,1009.9 725,1008.9 726.6,1007.9 728.1,1006.9 729.6,1005.9 731.2,1005 732.7,1004 734.2,1003.1 735.8,1002.2 737.3,1001.2 738.9,1000.3 740.4,999.4 742,998.5 743.5,997.6 745.1,996.7 746.6,995.8 748.2,995 749.8,994.1 751.3,993.3 752.9,992.4 754.5,991.6 756,990.7 757.6,989.9 759.2,989.1 760.8,988.3 762.4,987.5 763.9,986.7 765.5,985.9 767.1,985.2 768.7,984.4 770.3,983.7 771.9,982.9 773.5,982.2 775,981.4 776.6,980.7 778.2,980 779.8,979.3 781.4,978.6 783,977.9 784.6,977.2 786.2,976.5 787.8,975.8 789.4,975.2 791.1,974.5 792.7,973.9 794.3,973.2 795.9,972.6 797.5,972 799.1,971.4 800.7,970.8 802.4,970.2 804,969.6 805.6,969 807.2,968.4 808.9,967.9 810.5,967.3 812.1,966.8 813.7,966.2 815.4,965.7 817,965.2 818.6,964.7 820.3,964.2 821.9,963.7 823.6,963.2 825.2,962.7 826.8,962.3 828.5,961.8 830.1,961.3 831.8,960.9 833.4,960.5 835.1,960 836.7,959.6 838.4,959.2 840,958.8 841.7,958.4 843.3,958 845,957.7 846.6,957.3 848.3,957 849.9,956.6 851.6,956.3 853.3,955.9 854.9,955.6 856.6,955.3 858.2,955 859.9,954.7 861.6,954.4 863.2,954.1 864.9,953.9 866.6,953.6 868.2,953.3 869.9,953.1 871.6,952.9 873.2,952.6 874.9,952.4 876.6,952.2 878.2,952 879.9,951.8 881.6,951.6 883.2,951.5 884.9,951.3 886.6,951.1 888.3,951 889.9,950.8 891.6,950.7 893.3,950.6 895,950.5 896.6,950.4 898.3,950.3 900,950.2 901.7,950.1 903.4,950.1 905,950 906.7,950 908.4,950 910.1,949.9 911.7,949.9 913.4,949.9 915.1,949.9 916.8,949.9 918.5,949.9 920.1,950 921.8,950 923.5,950 925.2,950.1 926.9,950.1 928.5,950.2 930.2,950.3 931.9,950.4 933.6,950.5 935.2,950.6 936.9,950.7 938.6,950.8 940.3,950.9 941.9,951.1 943.6,951.2 945.3,951.4 947,951.6 948.7,951.7 950.3,951.9 952,952.1 953.7,952.3 955.4,952.5 957,952.7 958.7,953 960.4,953.2 962,953.4 963.7,953.7 965.4,953.9 967.1,954.2 968.7,954.5 970.4,954.8 972.1,955.1 973.7,955.4 975.4,955.7 977.1,956 978.7,956.4 980.4,956.7 982.1,957 983.7,957.4 985.4,957.8 987,958.2 988.7,958.6 990.4,959 992,959.4 993.7,959.8 995.3,960.2 997,960.6 998.6,961.1 1000.3,961.5 1001.9,962 1003.6,962.5 1005.2,962.9 1006.9,963.4 1008.5,963.9 1010.2,964.4 1011.8,964.9 1013.5,965.4 1015.1,966 1016.8,966.5 1018.4,967.1 1020,967.6 1021.7,968.2 1023.3,968.7 1024.9,969.3 1026.6,969.9 1028.2,970.5 1029.8,971.1 1031.4,971.8 1033.1,972.4 1034.7,973 1036.3,973.7 1037.9,974.3 1039.5,975 1041.1,975.7 1042.8,976.3 1044.4,977 1046,977.7 1047.6,978.4 1049.2,979.1 1050.8,979.8 1052.4,980.6 1054,981.3 1055.6,982.1 1057.2,982.8 1058.8,983.6 1060.4,984.3 1062,985.1 1063.6,985.9 1065.2,986.7 1066.8,987.5 1068.3,988.3 1069.9,989.1 1071.5,989.9 1073.1,990.8 1074.7,991.6 1076.2,992.5 1077.8,993.3 1079.4,994.2 1080.9,995.1 1082.5,995.9 1084.1,996.8 1085.6,997.7 1087.2,998.6 1088.8,999.5 1090.3,1000.5 1091.9,1001.4 1093.4,1002.3 1095,1003.3 1096.5,1004.2 1098.1,1005.2 1099.6,1006.1 1101.1,1007.1 1102.7,1008.1 1104.2,1009.1 1105.8,1010.1 1107.3,1011.1 1108.8,1012.1 1110.4,1013.1 1111.9,1014.1 1113.4,1015.1 1114.9,1016.2 1116.5,1017.2 1118,1018.3 1119.5,1019.3 1121,1020.4 1122.5,1021.5 1124,1022.6 1125.5,1023.7 1127.1,1024.8 1128.6,1025.9 1130.1,1027 1131.5,1028.1 1133,1029.3 1134.5,1030.4 1136,1031.5 1137.5,1032.7 1139,1033.8 1140.5,1035 1142,1036.1 1143.5,1037.3 1145,1038.5 1146.5,1039.7 1147.9,1040.8 1149.4,1042.1 1150.9,1043.3 1152.4,1044.5 1153.8,1045.7 1155.3,1046.9 1156.8,1048.2 1158.2,1049.4 1159.6,1050.7 1161.1,1051.9 1162.5,1053.2 1164,1054.5 1165.4,1055.8 1166.9,1057.1 1168.4,1058.4 1169.8,1059.7 1179.1,1049.2 1177.7,1047.9 1176.2,1046.6 1174.8,1045.3 1173.3,1044 1171.8,1042.7 1170.3,1041.4 1168.8,1040.1 1167.3,1038.8 1165.8,1037.5 1164.3,1036.2 1162.8,1035 1161.3,1033.7 1159.8,1032.5 1158.3,1031.2 1156.7,1030 1155.2,1028.7 1153.7,1027.5 1152.2,1026.3 1150.6,1025.1 1149.1,1023.9 1147.6,1022.7 1146,1021.5 1144.5,1020.4 1142.9,1019.2 1141.4,1018.1 1139.8,1016.9 1138.3,1015.8 1136.7,1014.7 1135.1,1013.6 1133.5,1012.5 1132,1011.4 1130.4,1010.3 1128.8,1009.2 1127.2,1008.1 1125.6,1007.1 1124,1006 1122.5,1005 1120.9,1003.9 1119.3,1002.9 1117.7,1001.9 1116.1,1000.9 1114.5,999.9 1112.9,998.9 1111.2,997.9 1109.6,996.9 1108,995.9 1106.4,995 1104.8,994 1103.2,993.1 1101.5,992.1 1099.9,991.2 1098.3,990.3 1096.7,989.4 1095,988.5 1093.4,987.6 1091.7,986.7 1090.1,985.8 1088.5,985 1086.8,984.1 1085.2,983.3 1083.5,982.4 1081.9,981.6 1080.2,980.8 1078.6,980 1076.9,979.2 1075.3,978.4 1073.6,977.6 1071.9,976.8 1070.3,976.1 1068.6,975.3 1066.9,974.5 1065.3,973.8 1063.6,973.1 1061.9,972.3 1060.3,971.6 1058.6,970.9 1056.9,970.2 1055.2,969.5 1053.6,968.8 1051.9,968.2 1050.2,967.5 1048.5,966.8 1046.8,966.2 1045.2,965.5 1043.5,964.9 1041.8,964.3 1040.1,963.7 1038.4,963.1 1036.7,962.5 1035,961.9 1033.3,961.3 1031.6,960.7 1029.9,960.2 1028.3,959.6 1026.6,959.1 1024.9,958.5 1023.2,958 1021.5,957.5 1019.8,957 1018.1,956.5 1016.4,956 1014.7,955.5 1013,955 1011.2,954.5 1009.5,954 1007.8,953.6 1006.1,953.1 1004.4,952.7 1002.7,952.3 1001,951.8 999.3,951.4 997.6,951 995.9,950.6 994.2,950.2 992.5,949.9 990.7,949.5 989,949.1 987.3,948.8 985.6,948.4 983.9,948.1 982.2,947.8 980.5,947.5 978.7,947.1 977,946.8 975.3,946.5 973.6,946.2 971.9,946 970.2,945.7 968.4,945.4 966.7,945.2 965,944.9 963.3,944.7 961.6,944.5 959.8,944.2 958.1,944 956.4,943.8 954.7,943.6 953,943.5 951.2,943.3 949.5,943.1 947.8,943 946.1,942.8 944.4,942.7 942.6,942.5 940.9,942.4 939.2,942.3 937.5,942.2 935.7,942.1 934,942 932.3,941.9 930.6,941.9 928.8,941.8 927.1,941.8 925.4,941.7 923.7,941.7 922,941.7 920.2,941.6 918.5,941.6 916.8,941.6 915.1,941.7 913.4,941.7 911.6,941.7 909.9,941.7 908.2,941.8 906.5,941.8 904.8,941.9 903,942 901.3,942.1 899.6,942.2 897.9,942.3 896.2,942.4 894.4,942.5 892.7,942.6 891,942.7 889.3,942.9 887.6,943 885.9,943.2 884.2,943.3 882.4,943.5 880.7,943.7 879,943.9 877.3,944.1 875.6,944.3 873.9,944.5 872.2,944.7 870.5,944.9 868.7,945.2 867,945.4 865.3,945.7 863.6,946 861.9,946.2 860.2,946.5 858.5,946.8 856.8,947.1 855.1,947.4 853.4,947.8 851.7,948.1 850,948.4 848.3,948.8 846.6,949.1 844.9,949.5 843.2,949.9 841.5,950.2 839.8,950.6 838.2,951 836.5,951.4 834.8,951.9 833.1,952.3 831.4,952.7 829.7,953.2 828,953.6 826.3,954.1 824.7,954.6 823,955 821.3,955.5 819.6,956 818,956.5 816.3,957 814.6,957.6 812.9,958.1 811.3,958.6 809.6,959.2 807.9,959.7 806.3,960.3 804.6,960.9 802.9,961.5 801.3,962.1 799.6,962.7 798,963.3 796.3,963.9 794.7,964.5 793,965.1 791.4,965.8 789.7,966.4 788.1,967.1 786.4,967.8 784.8,968.4 783.1,969.1 781.5,969.8 779.9,970.5 778.2,971.2 776.6,972 775,972.7 773.3,973.4 771.7,974.2 770.1,974.9 768.5,975.7 766.8,976.5 765.2,977.3 763.6,978.1 762,978.9 760.4,979.7 758.8,980.5 757.2,981.3 755.6,982.2 754,983 752.4,983.9 750.8,984.7 749.2,985.6 747.6,986.5 746,987.4 744.4,988.3 742.9,989.2 741.3,990.1 739.7,991 738.1,991.9 736.6,992.9 735,993.8 733.4,994.8 731.9,995.7 730.3,996.7 728.8,997.7 727.2,998.7 725.6,999.7 724.1,1000.7 722.5,1001.7 721,1002.7 719.4,1003.7 717.9,1004.8 716.4,1005.8 714.8,1006.9 713.3,1007.9 711.8,1009 710.3,1010.1 708.7,1011.1 707.2,1012.2 705.7,1013.3 704.2,1014.4 702.7,1015.5 701.2,1016.7 699.7,1017.8 698.2,1018.9 696.7,1020.1 695.2,1021.2 693.7,1022.4 692.2,1023.5 690.7,1024.7 689.2,1025.9 687.7,1027.1 686.2,1028.3 684.7,1029.5 683.3,1030.7 681.8,1031.9 680.3,1033.1 678.9,1034.3 677.4,1035.6 675.9,1036.8 674.5,1038.1 673,1039.3 671.6,1040.6 670.1,1041.9 668.7,1043.2 667.2,1044.5 665.8,1045.8 664.4,1047.1 662.9,1048.4 661.5,1049.7 660.1,1051 658.7,1052.4 657.3,1053.7Z" fill="#000"/>
<path d="M691.5,1032 692.8,1031 694.1,1030.1 695.4,1029.1 696.7,1028.2 698,1027.3 699.2,1026.3 700.5,1025.4 701.8,1024.5 703.1,1023.6 704.4,1022.7 705.7,1021.8 707,1021 708.4,1020.1 709.7,1019.2 711,1018.4 712.4,1017.5 713.7,1016.7 715.1,1015.8 716.4,1015 717.8,1014.2 719.1,1013.3 720.5,1012.5 721.9,1011.7 723.3,1010.9 724.6,1010.1 726,1009.3 727.4,1008.5 728.7,1007.6 730.1,1006.8 731.5,1006 732.9,1005.3 734.3,1004.5 735.7,1003.7 737.1,1002.9 738.5,1002.2 739.9,1001.4 741.4,1000.7 742.8,1000 744.2,999.2 745.6,998.5 747.1,997.8 748.5,997.1 750,996.4 751.4,995.7 752.9,995 754.3,994.3 755.8,993.6 757.3,993 758.7,992.3 760.2,991.7 761.7,991 763.2,990.4 764.7,989.7 766.2,989.1 767.7,988.5 769.2,987.9 770.7,987.3 772.2,986.7 773.7,986.1 775.2,985.6 776.7,985 778.2,984.4 779.8,983.9 781.3,983.3 782.8,982.8 784.4,982.3 785.9,981.7 787.4,981.2 789,980.7 790.5,980.2 792.1,979.7 793.6,979.2 795.2,978.8 796.7,978.3 798.3,977.8 799.9,977.4 801.4,976.9 803,976.5 804.6,976.1 806.1,975.6 807.7,975.2 809.3,974.8 810.9,974.4 812.5,974 814.1,973.6 815.6,973.3 817.2,972.9 818.8,972.5 820.4,972.2 822,971.8 823.6,971.5 825.2,971.2 826.8,970.9 828.4,970.6 830,970.3 831.6,970 833.3,969.7 834.9,969.4 836.5,969.1 838.1,968.9 839.7,968.6 841.3,968.4 843,968.1 844.6,967.9 846.2,967.7 847.8,967.5 849.4,967.3 851.1,967.1 852.7,966.9 854.3,966.7 855.9,966.5 857.6,966.3 859.2,966.2 860.8,966 862.5,965.9 864.1,965.8 865.7,965.6 867.4,965.5 869,965.4 870.6,965.3 872.3,965.3 873.9,965.2 875.5,965.1 877.2,965.1 878.8,965.1 880.4,965 882.1,965 883.7,965 885.4,965 887,965 888.6,965 890.3,965 891.9,965.1 893.5,965.1 895.2,965.1 896.8,965.2 898.4,965.3 900.1,965.3 901.7,965.4 903.3,965.5 904.9,965.6 906.6,965.7 908.2,965.8 909.8,965.9 911.5,966 913.1,966.2 914.7,966.3 916.3,966.5 917.9,966.6 919.6,966.8 921.2,967 922.8,967.2 924.4,967.4 926,967.6 927.6,967.8 929.3,968 930.9,968.2 932.5,968.4 934.1,968.7 935.7,968.9 937.3,969.2 938.9,969.5 940.5,969.7 942.1,970 943.7,970.3 945.3,970.6 946.8,970.9 948.4,971.2 950,971.5 951.6,971.9 953.2,972.2 954.8,972.5 956.3,972.9 957.9,973.3 959.5,973.6 961,974 962.6,974.4 964.2,974.8 965.7,975.2 967.3,975.6 968.8,976 970.4,976.4 971.9,976.9 973.5,977.3 975,977.8 976.6,978.2 978.1,978.7 979.6,979.1 981.2,979.6 982.7,980.1 984.2,980.6 985.7,981.1 987.2,981.6 988.7,982.1 990.2,982.7 991.8,983.2 993.3,983.7 994.8,984.3 996.2,984.8 997.7,985.4 999.2,986 1000.7,986.5 1002.2,987.1 1003.6,987.7 1005.1,988.3 1006.6,988.9 1008,989.5 1009.5,990.2 1011,990.8 1012.4,991.4 1013.8,992.1 1015.3,992.7 1016.7,993.4 1018.2,994 1019.6,994.7 1021,995.4 1022.4,996.1 1023.8,996.8 1025.2,997.5 1026.6,998.2 1028,998.9 1029.4,999.6 1030.8,1000.3 1032.2,1001.1 1033.6,1001.8 1035,1002.6 1036.3,1003.3 1037.7,1004.1 1039,1004.9 1040.4,1005.6 1041.7,1006.4 1043.1,1007.2 1044.4,1008 1045.8,1008.8 1047.1,1009.6 1048.4,1010.4 1049.7,1011.3 1051,1012.1 1052.3,1012.9 1053.6,1013.8 1054.9,1014.6 1056.2,1015.5 1057.5,1016.4 1058.8,1017.2 1060,1018.1 1061.3,1019 1062.6,1019.9 1063.8,1020.8 1065.1,1021.7 1066.3,1022.6 1067.5,1023.5 1068.8,1024.4 1070,1025.3 1071.2,1026.3 1072.4,1027.2 1073.6,1028.2 1074.8,1029.1 1076,1030.1 1077.2,1031 1078.4,1032 1079.5,1033 1080.7,1033.9 1081.9,1034.9 1083,1035.9 1084.2,1036.9 1085.3,1037.9 1086.5,1038.9 1087.6,1039.9 1088.7,1040.9 1089.9,1041.9 1091,1042.9 1092.1,1043.9 1093.2,1045 1094.3,1046 1095.4,1047 1096.5,1048.1 1097.6,1049.1 1098.6,1050.2 1099.7,1051.2 1100.8,1052.3 1101.8,1053.4 1102.8,1054.4 1103.9,1055.5 1104.9,1056.6 1105.9,1057.7 1107,1058.9 1108,1060 1109.1,1061.1 1118.6,1052.2 1117.5,1051.1 1116.5,1050 1115.4,1048.9 1114.4,1047.8 1113.3,1046.6 1112.2,1045.5 1111.1,1044.3 1110,1043.2 1108.9,1042.1 1107.8,1040.9 1106.7,1039.8 1105.5,1038.7 1104.4,1037.6 1103.2,1036.5 1102.1,1035.5 1100.9,1034.4 1099.8,1033.3 1098.6,1032.2 1097.4,1031.2 1096.2,1030.1 1095,1029.1 1093.8,1028 1092.6,1027 1091.4,1026 1090.2,1025 1088.9,1024 1087.7,1023 1086.4,1022 1085.1,1021 1083.9,1020 1082.6,1019.1 1081.3,1018.1 1080,1017.1 1078.7,1016.2 1077.5,1015.3 1076.1,1014.3 1074.8,1013.4 1073.5,1012.5 1072.2,1011.6 1070.9,1010.7 1069.5,1009.8 1068.2,1008.9 1066.9,1008 1065.5,1007.1 1064.2,1006.2 1062.8,1005.4 1061.4,1004.5 1060.1,1003.7 1058.7,1002.8 1057.3,1002 1055.9,1001.1 1054.5,1000.3 1053.1,999.5 1051.7,998.7 1050.3,997.9 1048.9,997.1 1047.5,996.3 1046.1,995.5 1044.6,994.8 1043.2,994 1041.8,993.2 1040.3,992.5 1038.9,991.8 1037.4,991 1036,990.3 1034.5,989.6 1033,988.9 1031.6,988.2 1030.1,987.5 1028.6,986.8 1027.1,986.1 1025.6,985.4 1024.1,984.8 1022.6,984.1 1021.1,983.4 1019.6,982.8 1018.1,982.2 1016.6,981.5 1015.1,980.9 1013.6,980.3 1012.1,979.7 1010.5,979.1 1009,978.5 1007.5,977.9 1005.9,977.4 1004.4,976.8 1002.8,976.2 1001.3,975.7 999.7,975.1 998.2,974.6 996.6,974.1 995,973.6 993.5,973.1 991.9,972.6 990.3,972.1 988.8,971.6 987.2,971.1 985.6,970.6 984,970.2 982.4,969.7 980.8,969.3 979.2,968.8 977.6,968.4 976,968 974.4,967.6 972.8,967.2 971.2,966.8 969.6,966.4 968,966 966.4,965.6 964.8,965.3 963.1,964.9 961.5,964.6 959.9,964.2 958.3,963.9 956.6,963.6 955,963.3 953.4,963 951.7,962.7 950.1,962.4 948.4,962.1 946.8,961.8 945.2,961.6 943.5,961.3 941.9,961 940.2,960.8 938.6,960.6 936.9,960.4 935.3,960.1 933.6,959.9 932,959.7 930.3,959.5 928.6,959.4 927,959.2 925.3,959 923.7,958.9 922,958.7 920.3,958.6 918.7,958.5 917,958.3 915.3,958.2 913.7,958.1 912,958 910.3,957.9 908.7,957.9 907,957.8 905.3,957.7 903.7,957.7 902,957.6 900.3,957.6 898.6,957.6 897,957.5 895.3,957.5 893.6,957.5 892,957.5 890.3,957.5 888.6,957.6 886.9,957.6 885.3,957.6 883.6,957.7 881.9,957.7 880.2,957.8 878.6,957.9 876.9,957.9 875.2,958 873.6,958.1 871.9,958.2 870.2,958.3 868.6,958.4 866.9,958.5 865.2,958.7 863.6,958.8 861.9,958.9 860.2,959.1 858.6,959.2 856.9,959.4 855.2,959.5 853.6,959.7 851.9,959.9 850.2,960.1 848.6,960.3 846.9,960.5 845.3,960.7 843.6,961 842,961.2 840.3,961.4 838.6,961.7 837,961.9 835.3,962.2 833.7,962.5 832,962.8 830.4,963.1 828.8,963.4 827.1,963.7 825.5,964 823.8,964.3 822.2,964.7 820.6,965 818.9,965.3 817.3,965.7 815.7,966.1 814.1,966.4 812.4,966.8 810.8,967.2 809.2,967.6 807.6,968 806,968.4 804.4,968.9 802.7,969.3 801.1,969.7 799.5,970.2 797.9,970.6 796.3,971.1 794.7,971.6 793.1,972.1 791.6,972.5 790,973 788.4,973.5 786.8,974.1 785.2,974.6 783.7,975.1 782.1,975.6 780.5,976.2 779,976.7 777.4,977.3 775.8,977.9 774.3,978.4 772.7,979 771.2,979.6 769.6,980.2 768.1,980.8 766.6,981.4 765,982 763.5,982.7 762,983.3 760.4,983.9 758.9,984.6 757.4,985.2 755.9,985.9 754.4,986.6 752.9,987.3 751.4,988 749.9,988.6 748.4,989.4 746.9,990.1 745.5,990.8 744,991.5 742.5,992.2 741,993 739.6,993.7 738.1,994.5 736.7,995.2 735.2,996 733.8,996.8 732.3,997.6 730.9,998.4 729.5,999.2 728.1,1000 726.6,1000.8 725.2,1001.6 723.8,1002.4 722.4,1003.3 721,1004.1 719.6,1004.9 718.2,1005.8 716.9,1006.7 715.5,1007.6 714.2,1008.5 712.8,1009.5 711.5,1010.4 710.2,1011.3 708.8,1012.2 707.5,1013.2 706.2,1014.1 704.9,1015.1 703.6,1016 702.3,1017 701,1018 699.7,1019 698.4,1020 697.2,1021 695.9,1022 694.6,1023 693.4,1024 692.2,1025 690.9,1026 689.7,1027 688.5,1028Z" fill="#000"/>
<path d="M196,840.3 196.3,835.9 196.6,831.4 196.8,826.9 197.2,822.4 197.6,817.8 198.2,813.2 199,808.6 199.9,803.9 201.2,798.1 202.8,792 204.5,785.8 206.4,779.6 208.6,773.3 210.9,767.2 213.4,761.3 216.1,755.6 219,750.3 222.2,745 225.5,739.8 229.1,734.8 232.8,729.9 236.6,725 240.6,720.4 244.6,715.9 248.6,711.6 252.8,707.4 257,703.3 261.4,699.3 265.9,695.5 270.5,692 275.1,688.6 279.9,685.5 284.6,682.7 289.4,680.1 294.3,677.7 299.4,675.5 304.5,673.4 309.7,671.4 314.9,669.6 320.1,667.8 325.1,666.2 330.1,664.6 335.1,663.1 340,661.8 345,660.6 350,659.6 355.1,658.9 360.2,658.5 365.9,658.4 371.7,658.7 377.7,659.2 383.8,660 389.9,661 396,662.2 402.1,663.5 408.1,664.9 414.2,666.5 420.3,668.3 426.5,670.3 432.5,672.4 438.5,674.7 444.4,677.1 450.1,679.7 455.6,682.5 460.9,685.5 466.1,688.7 471.3,692 476.3,695.5 481.1,699.1 485.6,702.9 489.9,706.7 493.7,710.7 497.1,714.4 500.4,718.3 503.4,722.4 506.2,726.6 508.9,730.9 511.5,735.4 513.9,740.1 516.2,744.8 518.6,749.8 520.8,755.1 522.9,760.7 524.8,766.4 526.6,772.1 528.2,777.7 529.5,783.2 530.6,788.4 531.4,792.4 531.9,796.3 532.3,800.1 532.6,803.9 532.8,807.7 532.9,811.6 533,815.7 533,819.9 533.1,824.8 533.1,829.8 533.1,834.7 533,839.7 532.8,844.7 532.3,849.7 531.7,854.6 530.7,859.5 529.1,865.3 527.2,871.4 525,877.5 522.4,883.7 519.7,889.8 516.7,895.8 513.6,901.6 510.4,907.1 507.1,912.1 503.6,917 499.9,921.8 496.1,926.5 492,931 487.9,935.4 483.6,939.7 479.2,943.7 474.7,947.6 470,951.4 465.2,954.9 460.2,958.4 455.1,961.7 449.9,964.9 444.7,968.1 439.5,971.1 434.5,973.9 429.4,976.6 424.3,979.2 419.1,981.7 414,984 408.9,986.2 403.8,988 398.7,989.7 393.9,991 389.1,992.1 384.3,993.1 379.4,993.9 374.5,994.5 369.7,995 364.8,995.3 359.9,995.5 355,995.5 350,995.4 345,995.1 340,994.6 335.1,994.1 330.2,993.3 325.5,992.5 320.9,991.6 317.1,990.7 313.4,989.8 309.9,988.9 306.5,987.8 303.1,986.6 299.7,985.3 296.2,983.7 292.7,982 288.2,979.5 283.6,976.5 278.8,973.1 274,969.4 269.1,965.6 264.4,961.9 259.7,958.4 255.3,955.1 251.9,952.9 248.7,950.9 245.6,949.1 242.7,947.3 240,945.6 237.3,943.8 234.8,941.7 232.2,939.3 228.6,935.5 224.9,931 221.1,926.1 217.4,920.8 213.9,915.4 210.6,910 207.6,904.7 205,899.7 203.2,895.8 201.5,891.8 199.9,887.9 198.6,884 197.4,880.1 196.4,876.2 195.6,872.3 195,868.5 194.6,865.1 194.5,861.7 194.6,858.3 194.7,854.9 195,851.4 195.3,847.8 195.7,844.1Z M187.7,843.4 187.4,847.1 187,850.7 186.7,854.4 186.6,858.1 186.5,861.8 186.6,865.6 187,869.5 187.6,873.7 188.4,877.9 189.3,882.2 190.5,886.4 191.8,890.7 193.3,895 195,899.3 197,903.7 199.7,909 202.8,914.6 206.3,920.3 210,925.9 213.8,931.4 217.8,936.6 221.8,941.4 225.8,945.7 228.9,948.5 232,951 235,953.1 238,955 241,956.8 244,958.6 247,960.4 250.1,962.5 254.3,965.6 258.9,969 263.6,972.7 268.5,976.6 273.5,980.3 278.5,983.9 283.6,987.2 288.5,990 292.4,991.9 296.2,993.6 299.9,995 303.6,996.3 307.4,997.5 311.2,998.5 315,999.5 319.1,1000.4 323.8,1001.4 328.8,1002.2 333.9,1003 339.1,1003.6 344.4,1004.1 349.6,1004.4 354.9,1004.5 360.1,1004.5 365.2,1004.3 370.4,1004 375.5,1003.5 380.7,1002.8 385.9,1002 391,1000.9 396.2,999.7 401.3,998.3 406.7,996.5 412.2,994.5 417.6,992.3 423,989.8 428.3,987.3 433.5,984.6 438.8,981.8 443.9,978.9 449.3,976 454.6,972.9 460,969.7 465.4,966.3 470.7,962.8 475.9,959.2 480.9,955.3 485.8,951.3 490.5,947 495.1,942.7 499.6,938.1 504,933.4 508.2,928.5 512.2,923.5 516,918.3 519.6,912.9 523.2,907.1 526.7,901 529.9,894.7 533,888.3 535.8,881.8 538.3,875.3 540.5,868.8 542.3,862.5 543.7,856.9 544.7,851.4 545.5,845.9 546,840.5 546.4,835.2 546.6,830 546.8,825 547,820.1 547.1,815.8 547.2,811.6 547.2,807.4 547.1,803.2 546.9,799 546.6,794.7 546.1,790.2 545.4,785.6 544.3,779.9 542.9,774 541.4,767.9 539.6,761.7 537.7,755.6 535.5,749.5 533.1,743.5 530.6,737.8 528,732.7 525.2,727.7 522.3,722.8 519.1,718 515.8,713.3 512.2,708.7 508.4,704.3 504.3,700.1 499.5,695.9 494.4,691.9 489,688.2 483.5,684.7 477.8,681.4 472.1,678.3 466.3,675.4 460.4,672.7 454.4,670 448.2,667.6 441.9,665.4 435.5,663.4 429.1,661.6 422.7,659.9 416.2,658.4 409.9,657.1 403.7,655.8 397.4,654.6 391.1,653.5 384.8,652.6 378.4,651.9 372.1,651.5 365.9,651.3 359.8,651.5 354.3,652 348.9,652.7 343.5,653.7 338.3,655 333.1,656.4 328,657.9 323,659.5 317.9,661.2 312.6,663 307.3,664.8 302,666.9 296.7,669 291.4,671.3 286.2,673.8 281.1,676.6 276.1,679.5 271.2,682.8 266.3,686.4 261.5,690.1 256.8,694 252.3,698.1 247.9,702.4 243.6,706.7 239.4,711.1 235.3,715.8 231.2,720.6 227.2,725.6 223.4,730.7 219.7,735.9 216.2,741.3 212.9,746.8 209.9,752.4 206.9,758.3 204.2,764.5 201.7,770.8 199.3,777.2 197.2,783.6 195.3,789.9 193.6,796.1 192.1,802.1 191.1,807.1 190.3,812.1 189.7,816.9 189.2,821.7 188.9,826.3 188.6,830.9 188.3,835.4 188,839.7Z" fill="#000"/>
<path d="M328,990.2 322.9,988.4 317.7,986.6 312.5,985 307.4,983.3 302.4,981.5 297.3,979.6 292.4,977.6 287.5,975.3 282.3,972.6 276.9,969.8 271.6,966.9 266.3,963.8 261.2,960.5 256.3,957 251.7,953.3 247.5,949.4 243.6,945.1 239.8,940.5 236.2,935.6 232.8,930.5 229.7,925.2 226.8,919.8 224.3,914.3 222,908.9 220.1,903.1 218.5,897 217.2,890.6 216.2,884.1 215.4,877.7 214.8,871.5 214.3,865.8 214,860.6 213.8,857.7 213.8,855.1 213.8,852.6 213.8,850.3 214,848.1 214.2,845.7 214.5,843.2 215,840.5 215.7,836.5 216.6,832.3 217.7,827.9 218.9,823.3 220.3,818.6 221.9,813.9 223.5,809.2 225.3,804.5 227.5,798.9 229.8,793.2 232.3,787.4 235,781.6 237.9,775.8 240.9,770.1 244.3,764.6 247.8,759.4 252,753.9 256.7,748.6 261.7,743.3 266.9,738.1 272.3,733 277.7,728.2 283.1,723.5 288.2,719.1 292.3,715.6 296.3,712.3 300.3,709.1 304.4,706.1 308.4,703.2 312.4,700.4 316.5,697.6 320.6,694.8 324.6,692.1 328.7,689.5 332.8,686.9 337,684.4 341.1,681.9 345.1,679.6 349.1,677.4 353,675.4 356.1,673.7 359.1,672 362,670.5 364.8,669 367.5,667.8 370.4,666.6 373.3,665.7 376.5,665 381,664.3 386,664 391.3,664.1 396.9,664.4 402.6,664.8 408.4,665.3 414.2,665.7 419.9,666 420.1,662 414.6,661.5 408.9,660.8 403.1,660.1 397.3,659.4 391.6,658.8 386,658.5 380.6,658.5 375.5,659 371.8,659.9 368.4,661 365.2,662.2 362.1,663.7 359.2,665.2 356.2,666.8 353.3,668.4 350.2,670 346.3,672.1 342.2,674.4 338.1,676.7 333.9,679.2 329.7,681.8 325.5,684.4 321.3,687.1 317.2,689.8 313.1,692.6 309,695.5 304.9,698.3 300.8,701.3 296.7,704.4 292.6,707.6 288.4,711 284.2,714.5 279.1,719 273.8,723.7 268.3,728.6 262.8,733.7 257.4,739.1 252.2,744.5 247.4,750.1 243,755.8 239.2,761.4 235.7,767.1 232.5,773 229.6,779 226.8,785 224.3,790.9 221.9,796.7 219.7,802.3 217.9,807.1 216.2,812 214.6,816.9 213.2,821.6 211.9,826.4 210.8,830.9 209.8,835.3 209,839.5 208.6,842.4 208.2,845 208,847.6 207.8,850.1 207.8,852.6 207.8,855.2 207.9,857.9 208,861 208.3,866.2 208.8,872.1 209.4,878.4 210.3,884.9 211.3,891.6 212.7,898.3 214.3,904.8 216.4,910.9 218.8,916.8 221.5,922.5 224.4,928.1 227.7,933.7 231.2,939 235,944.2 239,949 243.3,953.6 247.8,957.9 252.7,961.8 257.8,965.5 263.2,968.9 268.6,972.1 274.1,975.1 279.5,978 284.9,980.7 290,983.1 295.1,985.2 300.3,987.2 305.5,989 310.7,990.7 315.8,992.3 320.9,994 326,995.8Z" fill="#000"/>
<circle cx="327.0" cy="993.0" r="3.00" fill="#000"/>
<circle cx="420.0" cy="664.0" r="2.00" fill="#000"/>
<path d="M379.7,689.3 383.3,689.6 386.8,689.9 390.3,690.2 393.8,690.7 397.3,691.2 400.7,692 404.3,692.9 407.8,694 412.7,695.8 417.8,698.1 423.1,700.6 428.4,703.4 433.7,706.5 438.7,709.7 443.5,712.9 447.8,716.2 451.3,719.2 454.7,722.3 457.8,725.5 460.8,728.8 463.6,732.2 466.4,735.7 469,739.4 471.4,743.2 474,747.3 476.4,751.6 478.6,756 480.8,760.6 482.8,765.3 484.6,770.1 486.3,774.9 487.8,779.7 489.2,784.6 490.3,789.6 491.4,794.6 492.3,799.7 493,804.8 493.6,809.9 494,815 494.3,820.1 494.5,825.2 494.6,830.2 494.6,835.3 494.5,840.3 494.1,845.4 493.5,850.3 492.7,855.3 491.6,860.1 490,865.4 488,870.8 485.7,876.2 483.2,881.6 480.6,886.8 477.8,891.7 475,896.3 472.4,900.3 470.6,902.7 468.7,904.8 466.8,906.8 464.8,908.7 462.7,910.5 460.6,912.4 458.6,914.4 456.5,916.7 454.5,919.1 452.5,921.5 450.7,924.1 448.8,926.6 447,929 445,931.5 442.9,933.9 440.6,936.1 437.5,938.9 434.2,941.6 430.7,944.4 427,947 423.2,949.7 419.2,952.2 415.1,954.7 410.8,957 405.7,959.6 400.4,962.2 394.8,964.7 389.1,967.1 383.2,969.3 377.4,971.3 371.5,973.1 365.8,974.6 360.2,975.8 354.4,976.8 348.4,977.6 342.5,978.2 336.8,978.7 331.2,978.8 326,978.8 321.2,978.5 318.1,978.1 315.1,977.6 312.3,977 309.7,976.3 307.2,975.4 304.7,974.4 302.3,973.3 299.9,972 297.2,970.3 294.5,968.4 291.8,966.3 289.2,964 286.5,961.5 284,958.8 281.4,955.9 279,952.9 275.9,949 272.9,944.8 269.8,940.2 266.9,935.5 264.1,930.6 261.6,925.7 259.3,920.8 257.4,916.1 255.8,911.8 254.5,907.5 253.4,903.2 252.5,898.8 251.8,894.2 251.1,889.5 250.5,884.6 250,879.5 249.3,872.7 248.8,865.2 248.5,857.3 248.4,849.2 248.3,841.3 248.4,833.6 248.7,826.6 249,820.3 249.3,816.8 249.6,813.6 249.9,810.7 250.3,807.9 250.8,805.2 251.4,802.5 252.1,799.6 252.9,796.4 254.2,791.9 255.8,787 257.5,782 259.4,776.8 261.5,771.6 263.8,766.4 266.1,761.2 268.6,756.2 271.3,750.9 274.2,745.5 277.3,740.1 280.4,734.7 283.7,729.6 287,724.7 290.5,720.2 294,716.2 297,713.2 300.1,710.3 303.2,707.7 306.5,705.2 309.8,702.9 313.2,700.8 316.8,698.9 320.3,697.1 324,695.6 327.8,694.2 331.8,693 335.8,692 339.9,691.2 344,690.4 348.1,689.8 352,689.3 355.5,688.9 359,688.7 362.4,688.6 365.9,688.6 369.3,688.6 372.7,688.8 376.2,689Z M376.7,682 373.1,681.8 369.5,681.6 365.9,681.6 362.3,681.6 358.6,681.7 354.9,681.9 351.2,682.3 347.1,682.9 342.9,683.5 338.6,684.3 334.3,685.2 330,686.3 325.7,687.5 321.5,689 317.5,690.7 313.5,692.5 309.7,694.5 305.9,696.7 302.2,699.1 298.6,701.6 295,704.4 291.6,707.5 288.2,710.8 284.3,715.1 280.6,720 277,725.1 273.6,730.5 270.3,736.1 267.2,741.7 264.2,747.2 261.4,752.6 258.8,757.7 256.3,763 253.8,768.3 251.6,773.7 249.4,779 247.5,784.2 245.8,789.2 244.3,794 243.4,797.4 242.6,800.5 242,803.5 241.4,806.5 241,809.5 240.6,812.7 240.3,816 240,819.7 239.5,826.1 239.2,833.3 238.9,841.1 238.9,849.3 238.9,857.5 239.1,865.6 239.5,873.3 240,880.5 240.6,885.8 241.2,890.8 241.9,895.7 242.7,900.6 243.7,905.4 244.9,910.1 246.3,914.9 248,919.7 250.3,924.9 252.9,930.1 255.7,935.3 258.8,940.4 262,945.4 265.3,950.1 268.7,954.6 272,958.7 274.8,961.8 277.6,964.8 280.5,967.6 283.5,970.3 286.5,972.8 289.6,975.1 292.8,977.2 296.1,979 299.1,980.3 302,981.4 305,982.3 308,983.1 311,983.6 314.1,984 317.4,984.3 320.8,984.5 325.9,984.7 331.4,984.6 337.1,984.3 343.1,983.7 349.2,982.9 355.2,982 361.2,980.8 367,979.4 372.9,977.8 378.9,975.8 384.9,973.6 390.8,971.3 396.6,968.7 402.2,966.1 407.6,963.3 412.8,960.6 417.1,958.1 421.3,955.6 425.4,953 429.3,950.3 433.1,947.6 436.7,944.8 440.2,941.9 443.4,939.1 445.8,936.6 448.1,934.1 450.1,931.5 452,928.9 453.9,926.4 455.7,924 457.5,921.6 459.5,919.3 461.5,917.4 463.5,915.6 465.6,913.8 467.7,912.1 469.9,910.2 472.1,908.1 474.3,905.8 476.4,903.1 479.3,899 482.1,894.3 485,889.2 487.7,883.8 490.3,878.2 492.7,872.6 494.7,867 496.4,861.5 497.7,856.3 498.7,851.1 499.4,845.9 499.9,840.7 500.2,835.5 500.4,830.2 500.4,825 500.3,819.9 500,814.6 499.6,809.4 499,804.1 498.2,798.8 497.3,793.5 496.2,788.3 495,783.1 493.6,778.1 492.1,773.1 490.5,768 488.7,763 486.7,758.1 484.6,753.2 482.4,748.5 479.9,743.9 477.4,739.4 474.7,735.4 472,731.6 469.1,727.8 466.1,724.2 462.9,720.7 459.5,717.3 456,714 452.2,710.8 447.6,707.3 442.6,703.8 437.3,700.5 431.8,697.3 426.2,694.4 420.7,691.7 415.3,689.4 410.2,687.4 406.2,686.1 402.3,685.1 398.5,684.4 394.8,683.8 391.1,683.3 387.5,682.9 383.9,682.6 380.3,682.3Z" fill="#000"/>
<path d="M428.2,928 432,927.5 435.8,927 439.7,926.6 443.5,926.1 447.4,925.6 451.2,925.1 454.9,924.5 458.6,923.7 461.8,922.9 465,922.1 468.2,921.2 471.3,920.2 474.4,919.2 477.5,918 480.5,916.8 483.6,915.4 486.8,913.7 490,912 493.2,910.2 496.4,908.3 499.6,906.2 502.7,903.9 505.8,901.3 508.8,898.6 512.3,894.8 515.9,890.6 519.5,886.1 522.9,881.3 526.1,876.4 529.1,871.5 531.7,866.6 533.9,861.8 535.3,857.7 536.3,853.7 537.1,849.7 537.6,845.7 538,841.8 538.4,838 538.9,834.1 539.5,830.3 536.5,829.7 535.7,833.6 535,837.5 534.3,841.3 533.7,845.1 532.9,848.9 532,852.6 530.8,856.2 529.3,859.8 527.2,864.3 524.7,869 521.9,873.8 518.8,878.5 515.5,883.1 512.1,887.5 508.6,891.5 505.2,895 502.5,897.6 499.6,899.9 496.7,902.1 493.8,904.1 490.7,905.9 487.6,907.7 484.5,909.3 481.4,910.8 478.5,912.2 475.6,913.4 472.7,914.5 469.8,915.5 466.8,916.4 463.7,917.2 460.6,918.1 457.4,918.9 453.9,919.8 450.3,920.7 446.7,921.4 442.9,922.2 439.1,922.9 435.3,923.6 431.5,924.3 427.8,925Z" fill="#000"/>
<circle cx="428.0" cy="926.5" r="1.50" fill="#000"/>
<circle cx="538.0" cy="830.0" r="1.50" fill="#000"/>
<path d="M360,1002.5 361.7,1002.4 363.3,1002.4 365,1002.3 366.6,1002.3 368.3,1002.2 370,1002.1 371.9,1002.1 374,1002 377.7,1001.9 381.9,1001.8 386.4,1001.7 391.1,1001.6 396,1001.5 400.8,1001.4 405.7,1001.3 410.3,1001.2 410.3,998.2 405.6,998.2 400.8,998.2 395.9,998.1 391.1,998.1 386.4,998.1 381.9,998.1 377.7,998 374,998 371.9,997.9 370,997.9 368.3,997.8 366.6,997.8 365,997.7 363.4,997.6 361.7,997.6 360,997.5Z" fill="#000"/>
<circle cx="360.0" cy="1000.0" r="2.50" fill="#000"/>
<circle cx="410.3" cy="999.7" r="1.50" fill="#000"/>
<path d="M616.4,349.2 614.1,350.7 611.8,352.2 609.4,353.7 607.1,355.2 604.7,356.7 602.4,358.3 600.1,360.1 597.9,361.9 595.8,363.8 593.8,365.7 591.8,367.7 589.8,369.7 587.9,371.9 586,374.3 584.1,376.9 582.1,379.7 579.2,384.6 576.2,390 573.2,396 570.3,402.2 567.4,408.8 564.6,415.6 562.1,422.5 559.7,429.5 557.4,437.8 555.4,446.6 553.6,455.7 552,464.9 550.6,474.1 549.3,482.9 548.2,491.4 547.1,499.2 546.3,504.7 545.6,510 545,515.1 544.4,520.1 543.9,525 543.5,529.9 543.2,534.8 543,539.9 543,544.8 543.1,549.6 543.3,554.4 543.6,559.1 544,563.8 544.3,568.6 544.7,573.4 545,578.3 545.4,584.5 545.9,591 546.3,597.7 546.7,604.5 547.2,611.3 547.7,618 548.3,624.4 549,630.5 549.9,635.1 550.9,639.4 551.9,643.5 552.9,647.5 553.9,651.5 555,655.4 556,659.3 557,663.3 561,662.7 560.7,658.5 560.4,654.5 560.1,650.4 559.8,646.4 559.5,642.3 559.3,638.2 559.1,633.9 559,629.5 558.6,623.6 558.2,617.3 557.9,610.7 557.7,604 557.5,597.2 557.4,590.4 557.2,583.9 557,577.7 556.7,572.6 556.3,567.7 555.9,562.9 555.6,558.3 555.3,553.7 555.1,549.2 555,544.7 555,540.1 555.2,535.4 555.5,530.7 555.8,526.1 556.3,521.4 556.9,516.5 557.5,511.5 558.2,506.3 558.9,500.8 559.9,492.9 561,484.5 562.1,475.7 563.4,466.7 564.8,457.7 566.4,448.8 568.2,440.4 570.3,432.5 572.2,425.9 574.5,419.2 576.9,412.6 579.4,406.2 582.1,400.1 584.7,394.3 587.4,389 589.9,384.3 591.4,381.5 592.8,379 594.3,376.6 595.7,374.4 597.2,372.3 598.8,370.2 600.4,368.2 602.1,366.1 603.8,364.1 605.7,362.1 607.6,360.2 609.5,358.3 611.5,356.5 613.6,354.6 615.6,352.7 617.6,350.8Z" fill="#000"/>
<circle cx="617.0" cy="350.0" r="1.00" fill="#000"/>
<circle cx="559.0" cy="663.0" r="2.00" fill="#000"/>
<path d="M566,393.7 564.5,398.2 563,402.7 561.4,407.1 559.9,411.6 558.3,416.1 556.8,420.7 555.4,425.5 554.1,430.4 552.9,436.2 551.7,442.3 550.6,448.5 549.6,454.9 548.7,461.2 547.9,467.5 547.1,473.7 546.5,479.7 546.4,485 546.4,490.2 546.5,495.2 546.7,500.2 546.9,505.2 547.1,510.1 547.3,515 547.5,520 550.5,520 550.8,515 551.1,510.1 551.4,505.2 551.7,500.3 552,495.3 552.4,490.4 552.9,485.4 553.5,480.3 554,474.4 554.6,468.3 555.3,462.1 556,455.8 556.9,449.5 557.9,443.4 558.9,437.4 559.9,431.6 560.8,426.7 561.7,422 562.7,417.3 563.7,412.7 564.8,408.1 565.9,403.5 566.9,398.9 568,394.3Z" fill="#000"/>
<circle cx="567.0" cy="394.0" r="1.00" fill="#000"/>
<circle cx="549.0" cy="520.0" r="1.50" fill="#000"/>
<path d="M569.1,656.5 567.6,660.5 566.1,664.6 564.5,668.7 563,672.8 561.5,676.9 560.1,681.1 558.7,685.1 557.6,689.1 556.9,692.5 556.3,695.6 555.7,698.7 555.2,701.8 554.8,705 554.5,708.4 554.4,711.9 554.3,715.7 554.5,721.6 555,728.1 555.6,735 556.5,742.1 557.6,749.3 558.8,756.4 560.3,763.4 561.9,770 563.6,775.8 565.5,781.5 567.6,787 569.8,792.4 572.1,797.7 574.5,802.8 576.8,808 579.2,813.1 581.6,818 584,822.9 586.5,827.7 589.1,832.4 591.6,837.1 594.2,841.8 596.7,846.5 599.2,851.2 606.4,847.6 604.1,842.8 601.7,837.9 599.4,833.1 597.1,828.3 594.8,823.5 592.6,818.7 590.4,813.9 588.2,808.9 585.9,803.8 583.6,798.7 581.3,793.6 579,788.5 576.9,783.3 574.9,778.1 573.1,772.8 571.5,767.4 570,761.2 568.6,754.6 567.4,747.7 566.4,740.8 565.6,733.9 564.9,727.3 564.5,721.1 564.3,715.5 564.2,712.1 564.3,708.9 564.4,705.9 564.7,703 565,700.1 565.4,697.2 565.9,694.1 566.4,690.9 566.9,687 567.6,683 568.3,678.9 569.2,674.6 570.2,670.4 571.1,666.1 572.1,661.8 572.9,657.5Z" fill="#000"/>
<circle cx="571.0" cy="657.0" r="2.00" fill="#000"/>
<circle cx="602.8" cy="849.4" r="4.00" fill="#000"/>
<path d="M550.1,738.8 551.1,742.9 552,747 552.9,751.1 553.9,755.3 554.8,759.4 555.8,763.4 556.7,767.4 557.7,771.3 558.7,774.5 559.7,777.7 560.7,780.9 561.7,784 562.7,787.1 563.8,790.2 565,793.4 566.3,796.5 567.9,799.8 569.7,802.9 571.5,806 573.3,809.1 575.2,812.1 577.1,815.2 579,818.2 580.8,821.2 585.2,818.8 583.7,815.6 582.2,812.4 580.6,809.2 579.1,806 577.6,802.8 576.2,799.7 574.9,796.6 573.7,793.5 572.6,790.5 571.6,787.5 570.7,784.6 569.8,781.5 568.9,778.4 568.1,775.3 567.2,772 566.3,768.7 565,765 563.7,761.2 562.4,757.2 561.1,753.3 559.8,749.2 558.5,745.2 557.2,741.2 555.9,737.2Z" fill="#000"/>
<circle cx="553.0" cy="738.0" r="3.00" fill="#000"/>
<circle cx="583.0" cy="820.0" r="2.50" fill="#000"/>
<path d="M621.6,366.6 622.3,371 623.1,375.3 623.8,379.5 624.5,383.8 625.3,388.2 626,392.5 626.8,397 627.7,401.5 629,406.4 630.3,411.5 631.7,416.7 633.1,422 634.5,427.2 636.1,432.4 637.7,437.4 639.4,442.2 641,445.9 642.5,449.3 644.1,452.6 645.7,455.7 647.4,458.7 649.1,461.8 650.8,465.1 652.6,468.7 655.5,474.5 658.7,480.7 662.1,487.4 665.6,494.3 669.2,501.2 672.6,508.2 676,514.9 679.1,521.4 681.7,526.9 684.1,532.6 686.6,538.4 689,544.1 691.4,549.7 693.8,555.1 696.4,560.2 699,564.9 701.2,568 703.3,570.8 705.4,573.4 707.5,575.7 709.6,577.9 711.6,580.1 713.5,582.2 715.5,584.5 722.9,578.5 721.1,576 719.2,573.6 717.4,571.3 715.6,569 713.8,566.7 712.2,564.3 710.5,561.8 709,559.1 706.6,554.8 704.4,550.1 702.1,545 699.8,539.5 697.5,533.8 695.1,528 692.6,522.1 689.9,516.2 686.8,509.7 683.4,502.8 679.9,495.8 676.3,488.8 672.8,481.9 669.4,475.3 666.3,469 663.4,463.3 661.5,459.6 659.7,456.2 658,453 656.3,450 654.8,447.1 653.4,444.2 652,441.1 650.6,437.8 648.9,433.5 647.3,428.8 645.7,423.9 644.1,418.8 642.6,413.7 641.2,408.5 639.7,403.4 638.3,398.5 636.7,394.3 635.2,390.1 633.7,385.9 632.3,381.8 630.8,377.7 629.4,373.6 627.9,369.5 626.4,365.4Z" fill="#000"/>
<circle cx="624.0" cy="366.0" r="2.50" fill="#000"/>
<circle cx="719.2" cy="581.5" r="4.75" fill="#000"/>
<path d="M624.3,369 626.3,373.2 628.4,377.4 630.4,381.6 632.4,385.8 634.5,390 636.4,394.2 638.3,398.4 640.2,402.6 642.3,406.9 644.5,411.3 646.7,415.7 648.8,420.2 650.9,424.7 652.9,429 654.7,433.3 656.5,437.4 657.8,440.5 659,443.5 660.1,446.4 661.2,449.3 662.3,452.3 663.5,455.5 664.9,458.9 666.6,462.5 669.5,468.4 672.8,474.7 676.4,481.3 680.2,488.2 684.1,495.1 687.8,502 691.4,508.6 694.7,514.8 697.2,519.9 699.6,524.9 701.9,529.8 704.2,534.7 706.4,539.5 708.6,544.3 710.8,549 713,553.7 715,558 717,562.2 718.9,566.4 720.9,570.6 722.8,574.7 724.7,578.8 726.7,582.8 728.7,586.7 730.7,590 732.6,593.2 734.5,596.3 736.5,599.3 738.4,602.3 740.3,605.3 742.2,608.3 744.1,611.3 751.9,606.7 750.2,603.6 748.5,600.4 746.8,597.3 745.1,594.3 743.4,591.2 741.7,588 740.1,584.8 738.5,581.5 736.5,577.8 734.6,573.9 732.7,570 730.8,565.9 728.9,561.8 727,557.6 725,553.3 723,549.1 720.8,544.4 718.6,539.7 716.4,534.9 714.2,530.1 711.9,525.2 709.5,520.2 707.1,515.1 704.5,509.8 701.3,503.4 697.8,496.6 694.1,489.7 690.3,482.7 686.6,475.8 683.2,469.2 680.1,463.1 677.4,457.5 676,454.1 674.7,451 673.5,448 672.4,445.1 671.3,442.2 670.2,439.2 668.9,436 667.5,432.6 665.6,428.4 663.5,424.1 661.4,419.7 659.2,415.2 656.9,410.7 654.6,406.2 652.2,401.7 649.8,397.4 647.2,393.4 644.4,389.5 641.6,385.7 638.9,381.9 636.1,378.2 633.3,374.4 630.5,370.7 627.7,367Z" fill="#000"/>
<circle cx="626.0" cy="368.0" r="2.00" fill="#000"/>
<circle cx="748.0" cy="609.0" r="4.50" fill="#000"/>
<path d="M730.3,544.4 731.4,542.6 732.4,540.8 733.5,538.9 734.5,537.1 735.5,535.3 736.6,533.5 737.6,531.7 738.7,530 739.6,528.3 740.5,526.6 741.5,524.9 742.4,523.3 743.4,521.6 744.4,519.9 745.4,518.2 746.3,516.6 744.7,515.4 743.5,517 742.3,518.5 741.1,520.1 740,521.6 738.8,523.1 737.6,524.7 736.4,526.3 735.3,528 734.3,529.8 733.3,531.7 732.3,533.6 731.4,535.5 730.5,537.3 729.5,539.2 728.6,541.1 727.7,543Z" fill="#000"/>
<circle cx="729.0" cy="543.7" r="1.50" fill="#000"/>
<circle cx="745.5" cy="516.0" r="1.00" fill="#000"/>
<path d="M729.7,415.4 731.3,413.8 733,412.2 734.6,410.6 736.2,409 737.9,407.4 739.5,405.8 741.1,404.3 742.8,402.8 744.2,401.1 745.6,399.5 747.1,397.8 748.5,396.2 750,394.6 751.5,393 753,391.4 754.5,389.7 753.1,388.3 751.4,389.6 749.7,391 747.9,392.3 746.2,393.6 744.4,395 742.7,396.4 741,397.8 739.2,399.2 737.7,401 736.2,402.7 734.7,404.5 733.3,406.3 731.8,408.1 730.4,409.8 728.9,411.6 727.5,413.4Z" fill="#000"/>
<circle cx="728.6" cy="414.4" r="1.50" fill="#000"/>
<circle cx="753.8" cy="389.0" r="1.00" fill="#000"/>
<path d="M753.3,371.7 755.7,369.7 758.1,367.7 760.5,365.7 762.9,363.6 765.3,361.6 767.7,359.6 770.2,357.6 772.7,355.7 775.2,353.4 777.8,350.9 780.4,348.5 782.9,346.1 785.5,343.9 788,341.9 790.4,340.1 792.7,338.8 794.1,338 795.7,337.4 797.2,336.8 798.8,336.4 800.5,336 802.2,335.6 803.9,335.2 805.6,334.7 805,331.7 803.3,332 801.6,332.1 799.9,332.3 798.1,332.5 796.3,332.7 794.4,333.1 792.4,333.6 790.3,334.4 787.7,336 785,337.9 782.3,340.1 779.6,342.4 776.9,344.8 774.3,347.3 771.8,349.7 769.3,351.9 767.1,354.2 764.9,356.5 762.7,358.8 760.5,361.1 758.4,363.4 756.2,365.7 754.1,368 751.9,370.3Z" fill="#000"/>
<circle cx="752.6" cy="371.0" r="1.00" fill="#000"/>
<circle cx="805.3" cy="333.2" r="1.50" fill="#000"/>
<path d="M793,336.3 794,336 794.9,335.8 795.8,335.5 796.7,335.3 797.7,335 798.7,334.7 799.9,334.4 801.3,334 805.5,332.3 810.7,330.3 816.8,327.9 823.4,325.4 830.4,322.8 837.6,320.2 844.7,317.8 851.7,315.6 859.5,313.4 867.8,311 876.3,308.8 884.8,306.7 893.3,304.7 901.7,303.1 909.7,301.9 917.2,301.1 922.9,300.7 928.5,300.6 933.8,300.7 939.1,301 944.3,301.5 949.5,302.1 954.8,302.9 960.2,303.9 965.9,305 971.7,306.3 977.5,307.9 983.3,309.5 989.1,311.4 994.9,313.4 1000.7,315.6 1006.3,318 1012.3,320.6 1018.3,323.5 1024.3,326.5 1030.3,329.8 1036.1,333.1 1041.8,336.7 1047.4,340.4 1052.7,344.2 1057.7,348 1062.6,352.1 1067.3,356.4 1071.9,360.9 1076.6,365.5 1081.2,370.1 1085.9,374.8 1090.7,379.3 1096.3,373.7 1091.8,369 1087.3,364.2 1082.9,359.4 1078.3,354.6 1073.7,349.8 1069,345.1 1064,340.5 1058.7,336.2 1053.1,332.2 1047.2,328.3 1041.3,324.6 1035.2,321 1029,317.7 1022.7,314.5 1016.5,311.6 1010.3,308.8 1004.3,306.4 998.3,304.2 992.2,302.1 986.1,300.2 980,298.5 973.9,297 967.9,295.7 961.8,294.5 956.2,293.6 950.7,292.8 945.2,292.2 939.7,291.8 934.1,291.5 928.4,291.5 922.5,291.7 916.4,292.1 908.4,293.1 900.1,294.5 891.5,296.3 882.8,298.4 874.1,300.7 865.5,303.1 857.2,305.6 849.3,308 842.3,310.3 835,312.9 827.7,315.6 820.7,318.4 814,321.1 808,323.6 802.8,325.7 798.7,327.4 797.4,328.1 796.3,328.7 795.3,329.2 794.4,329.7 793.6,330.2 792.8,330.7 791.9,331.2 791,331.7Z" fill="#000"/>
<circle cx="792.0" cy="334.0" r="2.50" fill="#000"/>
<circle cx="1093.5" cy="376.5" r="4.00" fill="#000"/>
<path d="M1008.2,321.3 998.2,321.6 988,321.9 977.7,322.1 967.5,322.3 957.3,322.6 947.5,323.1 938,323.7 929,324.6 922.3,325.7 916,326.9 910,328.2 904.2,329.6 898.4,331.1 892.7,332.6 887,334.1 881.2,335.7 875.3,337.3 869.5,338.8 863.7,340.4 857.8,342.1 851.9,343.8 846,345.7 839.9,347.7 833.6,350 825.8,353 817.5,356.4 809,360.1 800.3,364 791.9,367.8 783.9,371.6 776.6,375.2 770.2,378.5 766.7,380.3 763.4,382 760.3,383.6 757.4,385.2 754.5,386.9 751.8,388.7 749.3,390.7 746.9,392.9 744.8,395.1 743,397.4 741.4,399.9 739.9,402.4 738.5,404.9 737.3,407.6 736.2,410.3 735.2,413 734.2,416.2 733.5,419.4 732.9,422.6 732.5,425.9 732.1,429.3 731.9,432.7 731.7,436.3 731.5,439.8 731.3,444.5 731.2,449.5 731.1,454.6 731.2,459.9 731.4,465.2 731.7,470.4 732.3,475.5 733,480.3 734,484.5 735.1,488.4 736.4,492.2 737.8,495.9 739.3,499.6 740.8,503.2 742.2,506.8 743.6,510.5 746.4,509.5 745.2,505.7 743.8,502 742.4,498.4 741.1,494.7 739.8,491 738.7,487.3 737.7,483.5 737,479.7 736.4,475 736,470.1 735.7,465 735.7,459.8 735.7,454.7 735.9,449.6 736.2,444.7 736.5,440.2 736.8,436.6 737.1,433.2 737.5,429.9 737.9,426.7 738.5,423.6 739.1,420.6 739.9,417.7 740.8,415 741.8,412.5 742.8,410 743.9,407.6 745.1,405.3 746.4,403.1 747.9,401 749.4,399 751.1,397.1 753.2,395.2 755.3,393.5 757.7,392 760.3,390.4 763.1,388.9 766.2,387.4 769.5,385.7 773,383.9 779.3,380.6 786.6,377 794.5,373.3 802.8,369.4 811.4,365.6 819.9,362 828.1,358.6 835.8,355.6 841.9,353.4 847.8,351.4 853.7,349.5 859.5,347.8 865.3,346.2 871.1,344.6 876.9,343.1 882.8,341.5 888.6,339.9 894.3,338.4 899.9,336.9 905.6,335.4 911.3,334 917.2,332.8 923.4,331.6 929.8,330.6 938.6,329.3 947.9,328.3 957.6,327.5 967.7,326.8 977.9,326.2 988.2,325.6 998.4,325 1008.4,324.3Z" fill="#000"/>
<circle cx="1008.3" cy="322.8" r="1.50" fill="#000"/>
<circle cx="745.0" cy="510.0" r="1.50" fill="#000"/>
<path d="M1126,387.1 1126.2,401.3 1126.4,415.5 1126.6,429.8 1126.8,444.1 1127,458.3 1127.3,472.4 1127.6,486.4 1128,500.3 1128.7,513.1 1129.6,525.9 1130.4,538.5 1131.4,551.1 1132.3,563.5 1133.2,575.9 1134.1,588.2 1135,600.4 1136,612.3 1137.1,624.8 1138.4,637.3 1139.6,649.6 1140.5,661.3 1141.2,672.1 1141.4,681.7 1141,689.6 1140.7,692.7 1140.3,695.5 1139.7,698.1 1139.1,700.6 1138.4,703 1137.6,705.5 1136.9,708.1 1136.2,710.9 1143.8,713.1 1144.7,710.6 1145.7,708.3 1146.6,705.9 1147.6,703.4 1148.6,700.7 1149.6,697.7 1150.4,694.3 1151,690.4 1151.4,681.8 1151.2,671.7 1150.5,660.6 1149.5,648.7 1148.3,636.3 1147.1,623.8 1145.9,611.5 1145,599.6 1144.1,587.4 1143.2,575.1 1142.3,562.8 1141.3,550.3 1140.4,537.8 1139.5,525.2 1138.7,512.5 1138,499.7 1137.1,486 1136.2,472.1 1135.5,458 1134.8,443.8 1134.1,429.6 1133.4,415.3 1132.7,401.1 1132,386.9Z" fill="#000"/>
<circle cx="1129.0" cy="387.0" r="3.00" fill="#000"/>
<circle cx="1140.0" cy="712.0" r="4.00" fill="#000"/>
<path d="M1104.5,412.1 1104.7,420.6 1104.8,429 1104.9,437.4 1105,445.8 1105.2,454.3 1105.5,462.9 1105.9,471.6 1106.5,480.5 1107.7,490.3 1109.2,500.3 1110.8,510.3 1112.6,520.4 1114.4,530.5 1116.2,540.6 1117.9,550.7 1119.6,560.7 1121.1,570.8 1122.8,581 1124.4,591.2 1126,601.4 1127.6,611.5 1129,621.4 1130.4,631.1 1131.5,640.6 1132.7,648.8 1133.9,657.3 1135.2,665.7 1136.3,673.9 1137.2,681.6 1137.7,688.5 1137.7,694.4 1137.1,699.3 1136.7,700.8 1136.2,702.3 1135.5,703.7 1134.7,705.1 1133.7,706.5 1132.6,708 1131.5,709.6 1130.5,711.3 1135.5,714.7 1136.6,713.3 1137.7,712.1 1138.9,710.8 1140.2,709.3 1141.6,707.7 1142.8,705.8 1144,703.5 1144.9,700.7 1145.8,695 1145.9,688.3 1145.6,680.8 1144.8,672.9 1143.7,664.5 1142.6,656 1141.4,647.6 1140.5,639.4 1139.3,630 1137.9,620.2 1136.5,610.2 1134.9,600 1133.3,589.8 1131.7,579.5 1130,569.4 1128.4,559.3 1126.8,549.2 1125,539.1 1123.2,528.9 1121.4,518.8 1119.7,508.8 1118.1,498.9 1116.7,489.1 1115.5,479.5 1114.4,470.9 1113.5,462.4 1112.7,453.9 1112,445.5 1111.4,437.1 1110.8,428.8 1110.2,420.3 1109.5,411.9Z" fill="#000"/>
<circle cx="1107.0" cy="412.0" r="2.50" fill="#000"/>
<circle cx="1133.0" cy="713.0" r="3.00" fill="#000"/>
<path d="M618.8,853.5 629,851.4 639.3,849.4 649.5,847.4 659.8,845.4 670,843.4 680.3,841.3 690.5,839 700.7,836.7 710.6,834.1 720.3,831.5 729.9,828.8 739.5,826 749.2,823.1 759.1,820.1 769.4,817 780.2,813.6 794.9,809.1 810.8,804.2 827.5,799.1 844.5,793.8 861.3,788.4 877.6,782.8 892.9,777.4 906.7,771.9 915.8,767.9 924.3,763.9 932.3,759.9 939.9,755.9 947.3,751.8 954.6,747.8 962,743.8 969.7,739.8 967.9,736.2 960.1,740.1 952.6,743.9 945.1,747.8 937.7,751.7 930,755.5 922.1,759.3 913.7,763.1 904.7,766.9 890.9,772.2 875.8,777.7 859.6,783.1 842.8,788.6 825.9,793.9 809.2,799 793.3,803.8 778.6,808.4 767.8,811.7 757.5,814.9 747.6,817.9 737.9,820.7 728.4,823.5 718.8,826.2 709.2,828.8 699.3,831.3 689.3,833.9 679.2,836.3 669,838.6 658.8,840.8 648.6,842.9 638.4,845.1 628.2,847.3 618,849.5Z" fill="#000"/>
<circle cx="618.4" cy="851.5" r="2.00" fill="#000"/>
<circle cx="968.8" cy="738.0" r="2.00" fill="#000"/>
<path d="M684.9,841.5 704.7,837.7 724.4,833.8 744.2,830 763.9,826.1 783.7,822.3 803.4,818.6 823.2,814.9 842.9,811.4 863.3,807.8 884.5,804.3 906.1,800.9 927.6,797.5 948.3,794.2 967.8,790.9 985.5,787.7 1000.8,784.4 1008.6,782.6 1016.1,780.7 1023.3,778.8 1030,777 1036.1,775.1 1041.3,773.4 1045.7,771.7 1048.9,770.1 1049.7,769.5 1050.4,769 1051.1,768.4 1051.7,767.8 1052.2,767.1 1052.7,766.4 1053,765.3 1052.2,763.2 1050.4,762.4 1047.9,762.2 1044.8,762.3 1041.1,762.5 1037,762.9 1032.9,763.2 1029,763.5 1025.6,763.7 1025.6,765.7 1029.1,765.8 1033.1,765.7 1037.2,765.6 1041.2,765.5 1044.8,765.5 1047.7,765.7 1049.5,766 1049.6,766.2 1048.9,764.7 1048.9,764.3 1048.9,764.3 1048.6,764.5 1048.2,764.8 1047.7,765.1 1047.1,765.4 1046.5,765.7 1043.7,767.1 1039.7,768.7 1034.6,770.4 1028.6,772.2 1022,774 1014.9,775.9 1007.4,777.7 999.8,779.6 984.6,782.8 967,786 947.5,789.3 926.8,792.6 905.4,795.9 883.7,799.3 862.4,802.8 842.1,806.4 822.3,810.4 802.6,814.4 782.9,818.5 763.2,822.7 743.5,826.9 723.9,831.1 704.2,835.4 684.5,839.5Z" fill="#000"/>
<circle cx="684.7" cy="840.5" r="1.00" fill="#000"/>
<circle cx="1025.6" cy="764.7" r="1.00" fill="#000"/>
<path d="M1153.1,717 1156.6,716.4 1160,715.7 1163.4,715.1 1166.9,714.5 1170.3,713.9 1173.8,713.2 1177.3,712.6 1180.8,711.9 1184.6,710.9 1188.3,709.9 1192.1,708.9 1195.9,707.9 1199.7,706.9 1203.6,705.9 1207.4,704.8 1211.2,703.8 1208.8,696.2 1205.1,697.4 1201.4,698.7 1197.6,700 1193.9,701.2 1190.2,702.5 1186.5,703.7 1182.8,704.9 1179.2,706.1 1175.8,707.4 1172.5,708.7 1169.2,709.9 1166,711.1 1162.7,712.3 1159.4,713.6 1156.1,714.8 1152.9,716Z" fill="#000"/>
<path d="M1157.2,728 1160.1,727.3 1163.1,726.7 1166.1,726.1 1169,725.4 1172,724.8 1175,724.1 1178,723.5 1181.1,722.8 1184.5,721.8 1188,720.7 1191.5,719.7 1195.1,718.6 1198.7,717.5 1202.3,716.4 1205.9,715.3 1209.4,714.3 1206.6,705.7 1203.1,707 1199.6,708.4 1196.1,709.7 1192.5,711 1189.1,712.3 1185.6,713.6 1182.2,714.9 1178.9,716.2 1176,717.6 1173.2,718.9 1170.4,720.3 1167.7,721.6 1165,723 1162.3,724.3 1159.6,725.7 1156.8,727Z" fill="#000"/>
<path d="M791,231 791.8,230.8 792.7,230.8 793.8,231 794.8,231.5 795.8,232.1 796.6,233 798,236.8 798.8,242.9 799,250.3 798.9,258.5 798.6,266.6 798.3,274 798,281.4 797.5,289.9 796.8,298.4 796,305.7 795,310.9 794,313 793.2,312.4 792.3,310.6 791.4,308 790.5,304.9 789.7,301.6 789,298.5 788.3,293.8 787.9,288.4 787.7,282.7 787.6,276.8 787.6,271.1 787.6,265.7 787.7,261.3 787.8,256.8 788,252.4 788.3,248.3 788.6,244.4 789,241 789.2,238.9 789.4,236.8 789.6,234.8 789.9,233.1 790.3,231.8Z" fill="#fff"/>
<path d="M993,208 993.8,207.2 994.8,206.5 995.9,206 997,205.7 998.1,205.7 999,206 1000.5,207.8 1001.7,211.1 1002.7,215.5 1003.6,220.4 1004.3,225.4 1005,230 1005.7,234.8 1006.2,239.6 1006.5,244.6 1006.8,249.7 1006.9,254.8 1007,260 1007.1,266.5 1007.2,274.1 1007.3,281.8 1007,288.6 1006.3,293.6 1005,296 1004,296 1002.9,295.5 1001.6,294.5 1000.3,293.2 999.1,291.6 998,290 996.4,286.4 995.2,281.8 994.1,276.6 993.3,270.9 992.6,265.3 992,260 991.5,255 991.2,249.8 991,244.7 990.9,239.7 990.9,234.7 991,230 991,225.9 991,221.5 991.1,217.3 991.3,213.4 991.9,210.2Z" fill="#fff"/>
<path d="M798.2,313.6 799.5,309.5 800.7,305.5 802,301.4 803.3,297.3 804.6,293.2 805.8,289 806.9,284.9 807.9,280.8 808.7,276.9 809.5,272.9 810.3,268.9 811.1,264.8 811.7,260.7 812.1,256.7 812.2,252.6 812,248.6 811.4,244.9 810.6,241 809.6,237 808.4,233.1 807,229.5 805.3,226.2 803.2,223.5 800.1,221.7 796.6,221.6 793.7,222.7 791.1,224.3 788.5,226.4 786.1,228.7 783.7,231.2 781.6,233.7 779.6,236.2 777.5,239 775.4,242.2 773.5,245.6 771.7,249.2 770.2,252.9 768.7,256.7 767.6,260.5 766.6,264.3 765.9,268.1 765.3,272 764.9,276 764.8,280.1 764.8,284.1 765.2,288.2 765.7,292.1 766.6,295.9 767.9,299.7 769.4,303.3 771.2,306.9 773.3,310.3 775.5,313.6 777.8,316.7 780.1,319.6 782.4,322.4 784.6,324.5 786.8,326.4 789.1,328.1 791.4,329.7 793.7,331.1 795.9,332.5 798.1,333.9 800.2,335.4 803.8,330.6 801.6,328.9 799.4,327.3 797.2,325.8 795.1,324.3 793.1,322.8 791.1,321.2 789.3,319.5 787.6,317.6 785.5,315.2 783.3,312.5 781.2,309.6 779.2,306.6 777.4,303.5 775.7,300.3 774.4,297.2 773.4,294.1 772.6,290.8 772.1,287.4 771.8,283.8 771.8,280.2 771.9,276.5 772.3,272.8 772.8,269.2 773.4,265.7 774.2,262.3 775.2,258.8 776.3,255.3 777.7,251.8 779.2,248.5 780.8,245.4 782.5,242.5 784.4,239.8 786.2,237.7 788.3,235.5 790.5,233.3 792.7,231.3 794.8,229.8 796.7,228.7 797.8,228.3 797.9,228.3 798.2,228.6 799.1,230 800.2,232.4 801.3,235.4 802.3,238.9 803,242.6 803.6,246.2 804,249.4 804.2,252.7 804.1,256.1 803.8,259.8 803.2,263.5 802.5,267.4 801.7,271.3 800.9,275.3 800.1,279.2 799.4,283.3 798.7,287.4 797.9,291.5 797,295.6 796.1,299.8 795.2,304 794.3,308.2 793.4,312.4Z" fill="#000"/>
<circle cx="795.8" cy="313.0" r="2.50" fill="#000"/>
<circle cx="802.0" cy="333.0" r="3.00" fill="#000"/>
<path d="M1007.9,302.5 1009,298.8 1010.1,295.1 1011.2,291.4 1012.3,287.7 1013.4,283.9 1014.4,280.2 1015.5,276.4 1016.4,272.6 1017.4,268.6 1018.4,264.6 1019.4,260.5 1020.3,256.4 1021.2,252.3 1022,248.3 1022.8,244.3 1023.5,240.5 1024,237.3 1024.7,234 1025.4,230.7 1026,227.4 1026.5,224 1026.7,220.6 1026.5,217.2 1025.8,213.9 1024.7,210.8 1023.2,207.8 1021.4,204.8 1019.4,202 1017.1,199.4 1014.7,197.1 1012,195.3 1009,194.1 1006.1,193.8 1003.3,194 1000.6,194.7 997.9,195.7 995.4,197 993,198.6 990.8,200.4 988.7,202.7 986.8,205.9 985.5,209.8 984.6,213.8 984,218.1 983.6,222.4 983.4,226.7 983.2,230.9 983,234.8 982.8,238.6 982.7,242.5 982.6,246.4 982.7,250.3 982.9,254.2 983.1,258.1 983.5,261.9 984,265.6 984.7,269 985.4,272.4 986.1,275.9 987,279.3 988,282.6 989.2,285.8 990.5,288.9 991.9,291.7 993.4,293.8 994.9,295.6 996.5,297.2 998.1,298.6 999.7,299.9 1001.3,301.2 1002.7,302.4 1004.2,303.7 1007.8,300.3 1006.4,298.7 1005,297.2 1003.6,295.7 1002.3,294.3 1001,292.9 999.9,291.4 998.9,289.9 998.1,288.3 997,286 996,283.3 995.1,280.5 994.3,277.4 993.6,274.2 993,271 992.4,267.7 992,264.4 991.5,260.9 991.1,257.4 990.9,253.8 990.7,250.1 990.6,246.4 990.7,242.6 990.8,238.9 991,235.2 991.2,231.3 991.4,227.1 991.6,223 992,218.9 992.5,215.2 993.2,211.9 994.1,209.3 995.3,207.3 996.3,206.2 997.7,205 999.4,203.9 1001.2,203 1003,202.3 1004.6,201.9 1006.1,201.8 1007,201.9 1008.1,202.3 1009.7,203.4 1011.4,205 1013.1,206.9 1014.7,209.2 1016.2,211.6 1017.3,214 1018.2,216.1 1018.7,218.3 1018.9,220.7 1018.9,223.4 1018.6,226.3 1018.1,229.5 1017.6,232.7 1017,236.1 1016.5,239.5 1016.1,243.3 1015.6,247.2 1015.1,251.2 1014.4,255.3 1013.8,259.4 1013.1,263.4 1012.3,267.5 1011.6,271.4 1010.7,275.2 1009.8,279 1008.9,282.7 1008,286.5 1007,290.2 1006,294 1005,297.7 1004.1,301.5Z" fill="#000"/>
<circle cx="1006.0" cy="302.0" r="2.00" fill="#000"/>
<circle cx="1006.0" cy="302.0" r="2.50" fill="#000"/>
<path d="M1095,247 1098.3,244.6 1101.6,242.2 1105,239.8 1108.3,237.4 1111.7,235 1114.9,232.5 1118.1,230.1 1121.1,227.6 1123.6,225.3 1126.2,222.9 1128.7,220.4 1131.1,218 1133.4,215.6 1135.6,213.4 1137.5,211.3 1139.1,209.5 1139.8,208.7 1140.5,207.8 1141,207.1 1141.5,206.4 1142,205.7 1142.5,205.1 1142.9,204.4 1143.4,203.8 1138.6,200.2 1138.1,200.9 1137.6,201.6 1137.1,202.2 1136.7,202.9 1136.2,203.5 1135.7,204.2 1135.2,204.9 1134.5,205.7 1133,207.5 1131.3,209.5 1129.3,211.8 1127.1,214.2 1124.9,216.7 1122.5,219.2 1120.1,221.6 1117.7,224 1115,226.6 1112.2,229.3 1109.2,232 1106.2,234.6 1103.1,237.3 1099.9,240 1096.8,242.7 1093.8,245.4Z" fill="#000"/>
<circle cx="1094.4" cy="246.2" r="1.00" fill="#000"/>
<circle cx="1141.0" cy="202.0" r="3.00" fill="#000"/>
<path d="M1137.2,202.9 1137.6,204.5 1138,206 1138.5,207.5 1138.9,209.1 1139.3,210.6 1139.8,212.1 1140.2,213.7 1140.7,215.2 1141.3,216.6 1141.9,218 1142.5,219.4 1143,220.7 1143.6,222.1 1144.2,223.4 1144.8,224.7 1145.4,226.1 1151,223.9 1150.5,222.5 1150.1,221.1 1149.6,219.7 1149.1,218.4 1148.6,217 1148.2,215.6 1147.7,214.2 1147.3,212.8 1146.7,211.4 1146.2,210 1145.6,208.5 1145.1,207 1144.5,205.5 1144,204 1143.4,202.5 1142.8,201.1Z" fill="#000"/>
<circle cx="1140.0" cy="202.0" r="3.00" fill="#000"/>
<circle cx="1148.2" cy="225.0" r="3.00" fill="#000"/>
<path d="M1120.9,226.5 1122.8,226.6 1124.7,226.6 1126.6,226.7 1128.4,226.8 1130.3,226.8 1132.2,226.9 1134.1,226.9 1136,227 1137.9,227 1139.9,227 1141.9,226.9 1143.9,226.9 1146,226.9 1148,226.9 1150,226.8 1152,226.8 1152,224.8 1150,224.7 1148,224.6 1146,224.5 1144,224.4 1142,224.3 1140,224.2 1138,224.1 1136,224 1134.1,223.9 1132.3,223.9 1130.4,223.8 1128.5,223.8 1126.7,223.7 1124.8,223.6 1122.9,223.6 1121.1,223.5Z" fill="#000"/>
<circle cx="1121.0" cy="225.0" r="1.50" fill="#000"/>
<circle cx="1152.0" cy="225.8" r="1.00" fill="#000"/>
<path d="M1127.5,224.1 1130.1,223.4 1132.7,222.7 1135.3,222 1137.9,221.3 1140.5,220.6 1143.2,219.9 1146,219.1 1149,218.3 1153,216.9 1157.2,215.5 1161.6,213.9 1166.1,212.4 1170.7,210.8 1175.4,209.2 1179.9,207.6 1184.4,206.1 1183.2,202.3 1178.6,203.7 1174,205.2 1169.4,206.7 1164.7,208.1 1160.2,209.6 1155.7,210.9 1151.5,212.3 1147.4,213.5 1144.6,214.6 1141.8,215.6 1139.2,216.6 1136.7,217.5 1134.1,218.4 1131.6,219.4 1129.1,220.3 1126.5,221.3Z" fill="#000"/>
<circle cx="1127.0" cy="222.7" r="1.50" fill="#000"/>
<circle cx="1183.8" cy="204.2" r="2.00" fill="#000"/>
<path d="M60,228H1522V1048H60Z" fill="none" stroke="#2e5e3e" stroke-width="2"/>
<rect x="60" y="219" width="1462" height="819" fill="none" stroke="#a0102a" stroke-width="2"/>
<path d="M1507,204L1529,204L1529,214C1524,211 1516,206.5 1507,204Z" fill="#000"/>
<path d="M54.5,206 L59.5,212 L64.5,206 M59.5,210 L59.5,217" fill="none" stroke="#7f8fe8" stroke-width="1.6" opacity="0.85"/>
<path d="M1517,207 L1522,213 L1527,207 M1522,211 L1522,218" fill="none" stroke="#7f8fe8" stroke-width="1.6" opacity="0.85"/>
<path d="M1517,1025 L1522,1031 L1527,1025 M1522,1029 L1522,1036" fill="none" stroke="#7f8fe8" stroke-width="1.6" opacity="0.85"/>
</g>
<text x="0" y="0" font-family="Liberation Sans" font-size="80" fill="#18aa18" transform="translate(73,317) scale(0.95,1)">IN</text>
<text x="0" y="0" font-family="Liberation Sans" font-size="81" fill="#b40000" transform="translate(73,309) scale(0.946,1)">OUT</text>
</svg>
</body></html>
